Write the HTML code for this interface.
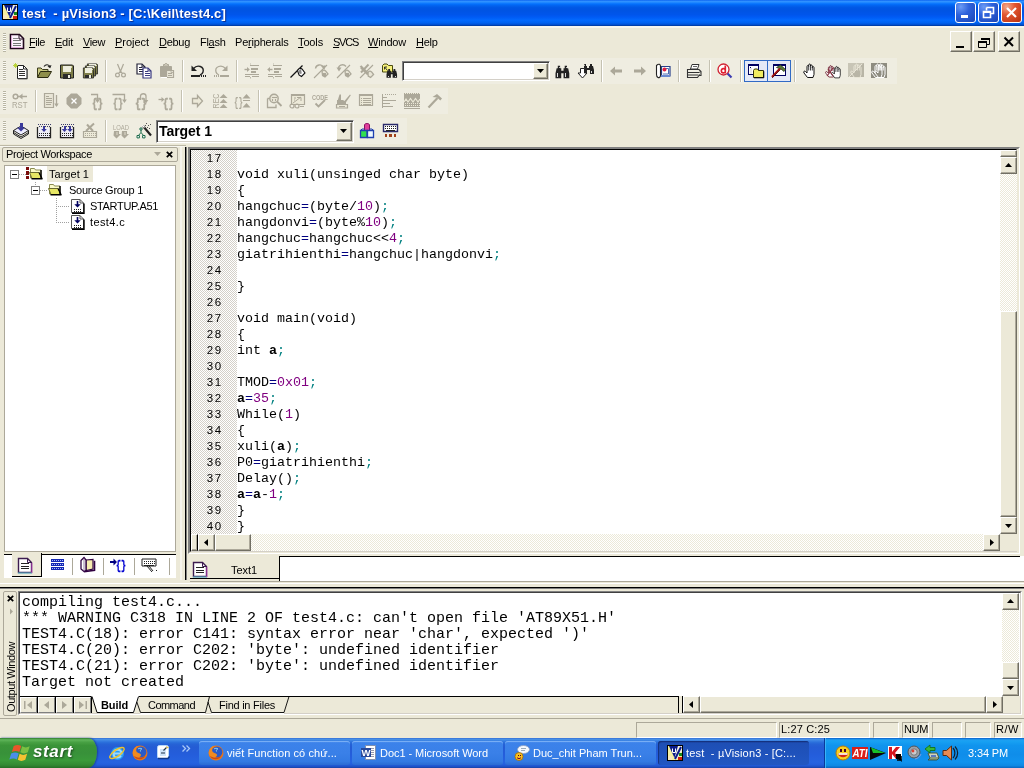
<!DOCTYPE html>
<html><head><meta charset="utf-8"><title>test - µVision3</title>
<style>
*{box-sizing:border-box;margin:0;padding:0}
html,body{width:1024px;height:768px;overflow:hidden;background:#ece9d8;font-family:"Liberation Sans",sans-serif;font-size:11px;color:#000}
.a{position:absolute}
.tx,.code,.out,.ln{will-change:transform}
svg{position:absolute;overflow:visible;will-change:transform}
#title{left:0;top:0;width:1024px;height:26px;background:linear-gradient(to bottom,#0058ee 0%,#3593ff 4%,#288eff 8%,#127dff 12%,#036ffc 16%,#0262ee 22%,#0057e5 30%,#0054e3 40%,#0055eb 56%,#005bf5 66%,#026afe 78%,#0062ef 88%,#0052d6 94%,#0040ab 98%,#003092 100%)}
#title .t{color:#fff;font-weight:bold;font-size:13px;white-space:pre;text-shadow:1px 1px 1px #0a2a8a}
.tb{top:2px;width:21px;height:21px;border:1px solid #fff;border-radius:3px;background:radial-gradient(circle at 25% 20%,#6b9bf5 0%,#2e62dc 40%,#1a45b5 100%)}
.tb.x{background:radial-gradient(circle at 25% 20%,#f3a98c 0%,#e2552f 40%,#b52f0e 100%)}
.mdib{top:31px;width:22px;height:21px;background:#ece9d8;border:1px solid;border-color:#fff #716f64 #716f64 #fff;box-shadow:inset -1px -1px 0 #aca899}
.bar{background:#efede1}
.sep{width:1px;background:#c5c2b2;box-shadow:1px 0 0 #fff}
.grip{width:3px;background:repeating-linear-gradient(to bottom,#b8b5a2 0,#b8b5a2 1px,#fbfaf4 1px,#fbfaf4 2px)}
.sunk{border:1px solid;border-color:#808080 #fff #fff #808080;box-shadow:inset 1px 1px 0 #404040, inset -1px -1px 0 #d4d0c8;background:#fff}
.btn{background:#ece9d8;border:1px solid;border-color:#fff #716f64 #716f64 #fff;box-shadow:inset -1px -1px 0 #aca899}
.dith{background-color:#fff;background-image:linear-gradient(45deg,#d4d0c8 25%,transparent 25%,transparent 75%,#d4d0c8 75%),linear-gradient(45deg,#d4d0c8 25%,transparent 25%,transparent 75%,#d4d0c8 75%);background-size:2px 2px;background-position:0 0,1px 1px}
.dith2{background-color:#fff;background-image:linear-gradient(45deg,#ece9d8 25%,transparent 25%,transparent 75%,#ece9d8 75%),linear-gradient(45deg,#ece9d8 25%,transparent 25%,transparent 75%,#ece9d8 75%);background-size:2px 2px;background-position:0 0,1px 1px}
.code{font-family:"Liberation Mono",monospace;font-size:13.33px;white-space:pre;line-height:16px;color:#000}
.ln{font-family:"Liberation Sans",sans-serif;font-size:11.5px;line-height:16px;color:#000;white-space:pre}
.ln i{display:inline-block;width:8px;text-align:center;font-style:normal}
.n{color:#800080}.s{color:#008080}.o{color:#000080}.k{font-weight:bold}
.out{font-family:"Liberation Mono",monospace;font-size:15px;white-space:pre;line-height:16px;color:#000}
</style></head><body>
<div id="title" class="a"><div class="a tx t" style="left:22px;top:6px;white-space:pre;letter-spacing:0.168px;">test  - µVision3 - [C:\Keil\test4.c]</div><svg style="left:2px;top:4px" width="16" height="16" viewBox="0 0 16 16"><rect x="0" y="0" width="16" height="16" fill="#000" shape-rendering="crispEdges"/><rect x="1" y="1" width="14" height="14" fill="#f4f0a0" shape-rendering="crispEdges"/><path d="M2 1h12l-6 13z" fill="#0a1a8a" /><path d="M11 1h4v5l-5 8h-3z" fill="#f4f0e0" /><path d="M8 14l6-12" fill="none" stroke="#0a1a8a" stroke-width="2" /><rect x="12" y="8" width="3" height="3" fill="#1a8a1a" shape-rendering="crispEdges"/><rect x="11" y="12" width="4" height="3" fill="#d02010" shape-rendering="crispEdges"/><path d="M5.5 3.5v4h3v-4" fill="none" stroke="#ffffff" stroke-width="1" /><rect x="1" y="11" width="4" height="4" fill="#f8e8c0" shape-rendering="crispEdges"/></svg><div class="a tb" style="left:955px"><svg style="left:0px;top:0px" width="19" height="19" viewBox="0 0 19 19"><rect x="5" y="12" width="7" height="3" fill="#ffffff" shape-rendering="crispEdges"/></svg></div><div class="a tb" style="left:978px"><svg style="left:0px;top:0px" width="19" height="19" viewBox="0 0 19 19"><path d="M7.5 4.5h7v6h-3 M7.5 4.5v3" fill="none" stroke="#ffffff" stroke-width="1.6" /><path d="M4.5 8.5h7v6h-7z M4.5 9.2h7" fill="none" stroke="#ffffff" stroke-width="1.6" /></svg></div><div class="a tb x" style="left:1001px"><svg style="left:0px;top:0px" width="19" height="19" viewBox="0 0 19 19"><path d="M5 5l9 9M14 5l-9 9" fill="none" stroke="#ffffff" stroke-width="2.2" /></svg></div></div>
<div class="a" style="left:0;top:26px;width:1024px;height:2px;background:#f7f6ee"></div><div class="a grip" style="left:3px;top:33px;height:19px"></div><svg style="left:10px;top:34px" width="16" height="16" viewBox="0 0 16 16"><path d="M0.5 0.5h9l4 4v10h-13z" fill="#fdf4fd" stroke="#20081c" stroke-width="1.6" /><path d="M9 1v4h4" fill="none" stroke="#20081c" stroke-width="1" /><rect x="3" y="4" width="5" height="1" fill="#888" shape-rendering="crispEdges"/><rect x="3" y="6" width="8" height="1.4" fill="#777" shape-rendering="crispEdges"/><rect x="3" y="8.5" width="8" height="1.4" fill="#777" shape-rendering="crispEdges"/><rect x="3" y="11" width="8" height="1.4" fill="#777" shape-rendering="crispEdges"/><path d="M1.5 1.5v12h11" fill="none" stroke="#e8a8e0" stroke-width="0.8" /></svg><div class="a tx " style="left:28.5px;top:36px;white-space:pre;letter-spacing:-0.438px;font-size:11px"><u>F</u>ile</div><div class="a tx " style="left:54.5px;top:36px;white-space:pre;letter-spacing:-0.242px;font-size:11px"><u>E</u>dit</div><div class="a tx " style="left:82.5px;top:36px;white-space:pre;letter-spacing:-0.414px;font-size:11px"><u>V</u>iew</div><div class="a tx " style="left:114.5px;top:36px;white-space:pre;letter-spacing:-0.036px;font-size:11px"><u>P</u>roject</div><div class="a tx " style="left:158.5px;top:36px;white-space:pre;letter-spacing:-0.287px;font-size:11px"><u>D</u>ebug</div><div class="a tx " style="left:199.5px;top:36px;white-space:pre;letter-spacing:-0.284px;font-size:11px">Fl<u>a</u>sh</div><div class="a tx " style="left:234.5px;top:36px;white-space:pre;letter-spacing:-0.197px;font-size:11px">Pe<u>r</u>ipherals</div><div class="a tx " style="left:297.5px;top:36px;white-space:pre;letter-spacing:-0.138px;font-size:11px"><u>T</u>ools</div><div class="a tx " style="left:332.5px;top:36px;white-space:pre;letter-spacing:-1.242px;font-size:11px"><u>S</u>VCS</div><div class="a tx " style="left:367.5px;top:36px;white-space:pre;letter-spacing:-0.190px;font-size:11px"><u>W</u>indow</div><div class="a tx " style="left:415.5px;top:36px;white-space:pre;letter-spacing:-0.285px;font-size:11px"><u>H</u>elp</div>
<div class="a mdib" style="left:950px"><svg style="left:0px;top:0px" width="20" height="19" viewBox="0 0 20 19"><rect x="5" y="14" width="8" height="2" fill="#000" shape-rendering="crispEdges"/></svg></div><div class="a mdib" style="left:973px"><svg style="left:0px;top:0px" width="20" height="19" viewBox="0 0 20 19"><path d="M7.5 6.5h8v6h-3" fill="none" stroke="#000" stroke-width="1" /><rect x="7" y="6" width="9" height="2" fill="#000" shape-rendering="crispEdges"/><path d="M4.5 10.5h8v5h-8z" fill="none" stroke="#000" stroke-width="1" /><rect x="4" y="9" width="9" height="2" fill="#000" shape-rendering="crispEdges"/></svg></div><div class="a mdib" style="left:998px"><svg style="left:0px;top:0px" width="20" height="19" viewBox="0 0 20 19"><path d="M5.5 5.5l8.5 8.5M14 5.5l-8.5 8.5" fill="none" stroke="#000" stroke-width="2" /></svg></div>
<div class="a bar" style="left:0;top:58px;width:897px;height:26px"></div><div class="a grip" style="left:3px;top:61px;height:19px"></div><svg style="left:13px;top:63px" width="16" height="16" viewBox="0 0 16 16"><path d="M4.5 2.5h6l3.5 3.5v9.5h-9.5z" fill="#fff" stroke="#222" stroke-width="1" /><path d="M10.5 2.5v3.5h3.5" fill="none" stroke="#222" stroke-width="1" /><rect x="6" y="6" width="4" height="1" fill="#333" shape-rendering="crispEdges"/><rect x="6" y="8" width="6" height="1" fill="#333" shape-rendering="crispEdges"/><rect x="6" y="10" width="6" height="1" fill="#333" shape-rendering="crispEdges"/><rect x="6" y="12" width="6" height="1" fill="#333" shape-rendering="crispEdges"/><path d="M14.3 6v10h-9.5" fill="none" stroke="#555" stroke-width="0.8" /><path d="M2.5 0v5M0 2.5h5M0.8 0.8l3.4 3.4M4.2 0.8l-3.4 3.4" fill="none" stroke="#b4d030" stroke-width="0.9" /></svg><svg style="left:36px;top:63px" width="16" height="16" viewBox="0 0 16 16"><path d="M1.5 14v-9h3.5l1.5 1.5h5.5v2" fill="#c8c880" stroke="#3a3a1a" stroke-width="1" /><path d="M1.5 14.5l3-6h11l-3.5 6z" fill="#8e8e4a" stroke="#2a2a10" stroke-width="1" /><path d="M8 3.5c1.5-2.5 5-2.5 6 0.5" fill="none" stroke="#222" stroke-width="1.1" /><path d="M15.5 2l-1.2 3.2l-2.8-1.7z" fill="#222" /></svg><svg style="left:59px;top:63px" width="16" height="16" viewBox="0 0 16 16"><g transform="translate(1,1.5) scale(1)"><path d="M0.5 0.5h12l1 1v12h-13z" fill="#7d7d48" stroke="#222" stroke-width="1" /><rect x="3" y="1" width="8" height="6" fill="#eeeede" shape-rendering="crispEdges"/><rect x="3" y="9" width="8" height="5" fill="#2a2a2a" shape-rendering="crispEdges"/><rect x="8" y="10" width="2" height="3" fill="#eeeede" shape-rendering="crispEdges"/><rect x="11.2" y="1.5" width="1.2" height="1.5" fill="#d8d8b0" shape-rendering="crispEdges"/></g></svg><svg style="left:82px;top:63px" width="16" height="16" viewBox="0 0 16 16"><g transform="translate(5,0.5) scale(0.78)"><path d="M0.5 0.5h12l1 1v12h-13z" fill="#7d7d48" stroke="#222" stroke-width="1" /><rect x="3" y="1" width="8" height="6" fill="#eeeede" shape-rendering="crispEdges"/><rect x="3" y="9" width="8" height="5" fill="#2a2a2a" shape-rendering="crispEdges"/><rect x="8" y="10" width="2" height="3" fill="#eeeede" shape-rendering="crispEdges"/><rect x="11.2" y="1.5" width="1.2" height="1.5" fill="#d8d8b0" shape-rendering="crispEdges"/></g><g transform="translate(3,2.5) scale(0.78)"><path d="M0.5 0.5h12l1 1v12h-13z" fill="#7d7d48" stroke="#222" stroke-width="1" /><rect x="3" y="1" width="8" height="6" fill="#eeeede" shape-rendering="crispEdges"/><rect x="3" y="9" width="8" height="5" fill="#2a2a2a" shape-rendering="crispEdges"/><rect x="8" y="10" width="2" height="3" fill="#eeeede" shape-rendering="crispEdges"/><rect x="11.2" y="1.5" width="1.2" height="1.5" fill="#d8d8b0" shape-rendering="crispEdges"/></g><g transform="translate(1,4.5) scale(0.78)"><path d="M0.5 0.5h12l1 1v12h-13z" fill="#7d7d48" stroke="#222" stroke-width="1" /><rect x="3" y="1" width="8" height="6" fill="#eeeede" shape-rendering="crispEdges"/><rect x="3" y="9" width="8" height="5" fill="#2a2a2a" shape-rendering="crispEdges"/><rect x="8" y="10" width="2" height="3" fill="#eeeede" shape-rendering="crispEdges"/><rect x="11.2" y="1.5" width="1.2" height="1.5" fill="#d8d8b0" shape-rendering="crispEdges"/></g></svg><div class="a sep" style="left:105px;top:60px;height:22px"></div><svg style="left:113px;top:63px" width="16" height="16" viewBox="0 0 16 16"><path d="M4.5 1l3.5 8.5M10.5 1l-3.5 8.5" fill="none" stroke="#aca899" stroke-width="1.2" /><circle cx="4.5" cy="12" r="1.9" fill="none" stroke="#aca899" stroke-width="1.2"/><circle cx="10.5" cy="12" r="1.9" fill="none" stroke="#aca899" stroke-width="1.2"/><path d="M5.5 10.3l2-2l2 2" fill="none" stroke="#aca899" stroke-width="1.1" /></svg><svg style="left:136px;top:63px" width="16" height="16" viewBox="0 0 16 16"><g transform="translate(0.5,0.5)"><path d="M0.5 0.5h5l3 3v7h-8z" fill="#fff" stroke="#26263a" stroke-width="1.2" /><path d="M5.5 0.5v3h3" fill="none" stroke="#26263a" stroke-width="1" /><rect x="2" y="3" width="3" height="1" fill="#26263a" shape-rendering="crispEdges"/><rect x="2" y="5" width="5" height="1" fill="#26263a" shape-rendering="crispEdges"/><rect x="2" y="7" width="5" height="1" fill="#26263a" shape-rendering="crispEdges"/></g><g transform="translate(6.5,4.5)"><path d="M0.5 0.5h5l3 3v7h-8z" fill="#fff" stroke="#3a3a80" stroke-width="1.2" /><path d="M5.5 0.5v3h3" fill="none" stroke="#3a3a80" stroke-width="1" /><rect x="2" y="3" width="3" height="1" fill="#3a3a80" shape-rendering="crispEdges"/><rect x="2" y="5" width="5" height="1" fill="#3a3a80" shape-rendering="crispEdges"/><rect x="2" y="7" width="5" height="1" fill="#3a3a80" shape-rendering="crispEdges"/></g></svg><svg style="left:159px;top:63px" width="16" height="16" viewBox="0 0 16 16"><path d="M1.5 3.5h11v10h-11z" fill="#aca899" stroke="#aca899" stroke-width="1" /><path d="M4.5 3v-1.5h1.5c0-1.6 2-1.6 2 0h1.5v1.5z" fill="#d8d4c4" stroke="#aca899" stroke-width="1" /><path d="M7.5 7.5h7v7h-7z" fill="#e8e5d6" stroke="#aca899" stroke-width="1.2" /><rect x="9" y="10" width="4" height="1" fill="#aca899" shape-rendering="crispEdges"/><rect x="9" y="12" width="4" height="1" fill="#aca899" shape-rendering="crispEdges"/><path d="M12 7.5v2h2.5" fill="none" stroke="#aca899" stroke-width="0.8" /><path d="M2 14.5h6" fill="none" stroke="#ffffff" stroke-width="1" /></svg><div class="a sep" style="left:182px;top:60px;height:22px"></div><svg style="left:190px;top:63px" width="16" height="16" viewBox="0 0 16 16"><path d="M3.5 5.5c4-4.5 11-2 9.5 3.5c-0.4 1.5-1.5 2.5-3 3" fill="none" stroke="#222" stroke-width="1.4" /><path d="M1.5 2.5v5.5h5.5z" fill="#222" /><rect x="0.5" y="12" width="9" height="2" fill="#222" shape-rendering="crispEdges"/><rect x="10.5" y="12" width="1" height="2" fill="#222" shape-rendering="crispEdges"/><rect x="12.5" y="12" width="1" height="2" fill="#222" shape-rendering="crispEdges"/><rect x="14.5" y="12" width="1" height="2" fill="#222" shape-rendering="crispEdges"/></svg><svg style="left:213px;top:63px" width="16" height="16" viewBox="0 0 16 16"><path d="M12.5 5.5c-4-4.5-11-2-9.5 3.5c0.4 1.5 1.5 2.5 3 3" fill="none" stroke="#aca899" stroke-width="1.3" /><path d="M14.5 2.5v5.5h-5.5z" fill="#aca899" /><rect x="6.5" y="12" width="9" height="1.6" fill="#aca899" shape-rendering="crispEdges"/><rect x="4.5" y="12" width="1" height="1.6" fill="#aca899" shape-rendering="crispEdges"/><rect x="2.5" y="12" width="1" height="1.6" fill="#aca899" shape-rendering="crispEdges"/><rect x="0.5" y="12" width="1" height="1.6" fill="#aca899" shape-rendering="crispEdges"/></svg><div class="a sep" style="left:236px;top:60px;height:22px"></div><svg style="left:244px;top:63px" width="16" height="16" viewBox="0 0 16 16"><rect x="6" y="2" width="9" height="1" fill="#aca899" shape-rendering="crispEdges"/><rect x="7" y="5" width="7" height="1.6" fill="#aca899" shape-rendering="crispEdges"/><rect x="7" y="8" width="5" height="1.6" fill="#aca899" shape-rendering="crispEdges"/><rect x="1" y="11" width="14" height="1" fill="#aca899" shape-rendering="crispEdges"/><rect x="1" y="13" width="5" height="1" fill="#aca899" shape-rendering="crispEdges"/><rect x="8" y="13" width="7" height="1" fill="#aca899" shape-rendering="crispEdges"/><path d="M6.5 0.5v1M6.5 14v1.5" fill="none" stroke="#aca899" stroke-width="0.8" /><path d="M0.5 6.5h3.5" fill="none" stroke="#aca899" stroke-width="1.4" /><path d="M3 4l2.8 2.5l-2.8 2.5z" fill="#aca899" /></svg><svg style="left:267px;top:63px" width="16" height="16" viewBox="0 0 16 16"><rect x="6" y="2" width="9" height="1" fill="#aca899" shape-rendering="crispEdges"/><rect x="7" y="5" width="7" height="1.6" fill="#aca899" shape-rendering="crispEdges"/><rect x="7" y="8" width="5" height="1.6" fill="#aca899" shape-rendering="crispEdges"/><rect x="1" y="11" width="14" height="1" fill="#aca899" shape-rendering="crispEdges"/><rect x="1" y="13" width="5" height="1" fill="#aca899" shape-rendering="crispEdges"/><rect x="8" y="13" width="7" height="1" fill="#aca899" shape-rendering="crispEdges"/><path d="M6.5 0.5v1M6.5 14v1.5" fill="none" stroke="#aca899" stroke-width="0.8" /><path d="M2 6.5h3.5" fill="none" stroke="#aca899" stroke-width="1.4" /><path d="M3 4l-2.8 2.5l2.8 2.5z" fill="#aca899" /></svg><svg style="left:290px;top:63px" width="16" height="16" viewBox="0 0 16 16"><path d="M0.5 14.5l12-12" fill="none" stroke="#111" stroke-width="1.2" /><path d="M7.5 7.5c1.5-2.5 3-2.5 4.5-1.5l3 4l-3.5 3.5l-2.5-1.5z" fill="#fff" stroke="#111" stroke-width="1.1" /><path d="M8 8l3-2l0.8 4.5l-2 0.5z" fill="#888" /></svg><svg style="left:313px;top:63px" width="16" height="16" viewBox="0 0 16 16"><path d="M1 15l13-13" fill="none" stroke="#aca899" stroke-width="1.1" /><path d="M9 8.5c1.2-1.6 2.4-1.6 3.6-0.6l2.4 3l-3 3l-2.4-1.4z" fill="#e8e5d6" stroke="#aca899" stroke-width="1.3" /><rect x="10" y="10" width="3" height="3" fill="#aca899" shape-rendering="crispEdges"/><path d="M2.5 5.5c0.5-4 6-5 8-1.5" fill="none" stroke="#aca899" stroke-width="1.4" /><path d="M8 3.2l4.5-1l-1 4.5z" fill="#aca899" /></svg><svg style="left:336px;top:63px" width="16" height="16" viewBox="0 0 16 16"><path d="M1 15l13-13" fill="none" stroke="#aca899" stroke-width="1.1" /><path d="M9 8.5c1.2-1.6 2.4-1.6 3.6-0.6l2.4 3l-3 3l-2.4-1.4z" fill="#e8e5d6" stroke="#aca899" stroke-width="1.3" /><rect x="10" y="10" width="3" height="3" fill="#aca899" shape-rendering="crispEdges"/><path d="M3 6.5c-1.5-4 4-6.5 7-3" fill="none" stroke="#aca899" stroke-width="1.4" /><path d="M0.5 4.5h5l-2.5 4z" fill="#aca899" /></svg><svg style="left:359px;top:63px" width="16" height="16" viewBox="0 0 16 16"><path d="M1 15l13-13" fill="none" stroke="#aca899" stroke-width="1.1" /><path d="M1.5 3l8 8M2 4.5l7 7" fill="none" stroke="#aca899" stroke-width="2.2" /><path d="M9.5 1.5l-7.5 8" fill="none" stroke="#aca899" stroke-width="2" /><path d="M9 9.5c1.2-1.6 2.4-1.6 3.6-0.6l2 2.6l-3 3l-2.4-1.4z" fill="#e8e5d6" stroke="#aca899" stroke-width="1.3" /></svg><svg style="left:382px;top:63px" width="16" height="16" viewBox="0 0 16 16"><path d="M0.5 2.5l1.5-1.5h3l1.5 1.5h4v6.5h-10z" fill="#f5f07a" stroke="#4a4a10" stroke-width="1" /><path d="M2.5 4l3 3.5M2.5 4v2.5M2.5 4h2.5" fill="none" stroke="#222" stroke-width="0.9" /><g transform="translate(4.5,5) scale(0.88)"><path d="M2 1h2v2h1v2h2v-2h1v-2h2v2h1l1 4v4h-5v-4h-2v4h-5v-4l1-4h1z" fill="#222" /><rect x="1.5" y="9" width="1.5" height="1.5" fill="#ddd" shape-rendering="crispEdges"/><rect x="9.5" y="9" width="1.5" height="1.5" fill="#ddd" shape-rendering="crispEdges"/></g></svg><svg style="left:555px;top:63px" width="16" height="16" viewBox="0 0 16 16"><g transform="translate(0.5,1.5) scale(1.15,1.25)"><g transform="translate(0,0)"><path d="M2 1h2v2h1v2h2v-2h1v-2h2v2h1l1 4v4h-5v-4h-2v4h-5v-4l1-4h1z" fill="#222" /><rect x="1" y="7" width="1" height="3" fill="#ddd" shape-rendering="crispEdges"/><rect x="8" y="7" width="1" height="3" fill="#ddd" shape-rendering="crispEdges"/><rect x="3" y="1.6" width="0.8" height="1" fill="#bbb" shape-rendering="crispEdges"/><rect x="9" y="1.6" width="0.8" height="1" fill="#bbb" shape-rendering="crispEdges"/></g></g></svg><svg style="left:578px;top:63px" width="16" height="16" viewBox="0 0 16 16"><g transform="translate(4,0)"><path d="M2 1h2v2h1v2h2v-2h1v-2h2v2h1l1 4v4h-4v-4h-3v4h-3v-8h1z" fill="#222" /><rect x="9" y="8" width="1.2" height="2" fill="#ddd" shape-rendering="crispEdges"/></g><path d="M2.5 5.5h4v4.5h2.5l-4.5 5l-4.5-5h2.5z" fill="#fff" stroke="#222" stroke-width="1" /></svg><div class="a sep" style="left:601px;top:60px;height:22px"></div><svg style="left:609px;top:63px" width="16" height="16" viewBox="0 0 16 16"><path d="M1 8l5-4.5v3h7v3h-7v3z" fill="#aca899" /></svg><svg style="left:632px;top:63px" width="16" height="16" viewBox="0 0 16 16"><path d="M14 8l-5-4.5v3h-7v3h7v3z" fill="#aca899" /></svg><svg style="left:655px;top:63px" width="16" height="16" viewBox="0 0 16 16"><path d="M6.5 3.5h8.5v9.5h-8.5z" fill="#fff" stroke="#28408a" stroke-width="1.2" /><path d="M8 5.5h5.5v5.5h-5.5" fill="none" stroke="#4a6ab0" stroke-width="1" /><rect x="6" y="12" width="9" height="1.5" fill="#6a8ad0" shape-rendering="crispEdges"/><circle cx="9.5" cy="6.5" r="2" fill="#e02040"/><path d="M1.5 2.5c2.5-2.5 4-1 4 1v9c0 1.5-1.5 2.5-2.5 2c-1-0.5-1.5-1.5-1.5-3z" fill="#fff" stroke="#222" stroke-width="1.1" /></svg><div class="a sep" style="left:678px;top:60px;height:22px"></div><svg style="left:686px;top:63px" width="16" height="16" viewBox="0 0 16 16"><path d="M4.5 6l1.5-4.5h7l-1.5 4.5z" fill="#fff" stroke="#333" stroke-width="1" /><rect x="7" y="3" width="4" height="0.8" fill="#666" shape-rendering="crispEdges"/><rect x="6.5" y="4.6" width="4" height="0.8" fill="#666" shape-rendering="crispEdges"/><path d="M1.5 6.5h11.5l2 2v4h-2l-1.5 2h-10z" fill="#f0efe4" stroke="#333" stroke-width="1.1" /><path d="M1.5 9.5h11.5M1.5 12h11" fill="none" stroke="#333" stroke-width="1" /><path d="M13 9.5l2-1" fill="none" stroke="#333" stroke-width="0.8" /><rect x="12.5" y="10.5" width="1.5" height="1" fill="#777" shape-rendering="crispEdges"/></svg><div class="a sep" style="left:709px;top:60px;height:22px"></div><svg style="left:717px;top:63px" width="16" height="16" viewBox="0 0 16 16"><circle cx="6.5" cy="6.5" r="5.5" fill="#fff" stroke="#d02030" stroke-width="1.3"/><path d="M10.5 10.5l4 4" fill="none" stroke="#3a3ab0" stroke-width="2.2" /><path d="M8.3 2.5v8M8.3 6.5c-1-1.5-4-1.2-4 1.2c0 2.6 3 2.8 4 1.3" fill="none" stroke="#e02030" stroke-width="1.7" /></svg><div class="a sep" style="left:740px;top:60px;height:22px"></div><div class="a" style="left:744px;top:60px;width:24px;height:22px;border:1px solid #316ac5;background:#e4e9f7"></div><div class="a" style="left:767px;top:60px;width:24px;height:22px;border:1px solid #316ac5;background:#e4e9f7"></div><svg style="left:748px;top:63px" width="16" height="16" viewBox="0 0 16 16"><rect x="0" y="1" width="11" height="11" fill="#000060" shape-rendering="crispEdges"/><rect x="1" y="3" width="9" height="8" fill="#fff" shape-rendering="crispEdges"/><rect x="1.5" y="3.5" width="1" height="1" fill="#000060" shape-rendering="crispEdges"/><rect x="2" y="5" width="2" height="6" fill="#e8e8e8" shape-rendering="crispEdges"/><path d="M5.5 7.5l1-1.5h3l1 1.5h5v7h-10z" fill="#f0ec60" stroke="#33330a" stroke-width="1" /><path d="M6 14.8h9.8v-6.5" fill="none" stroke="#000" stroke-width="0.9" /></svg><svg style="left:771px;top:63px" width="16" height="16" viewBox="0 0 16 16"><rect x="2" y="1" width="13" height="12" fill="#000060" shape-rendering="crispEdges"/><rect x="3" y="3" width="11" height="9" fill="#fff" shape-rendering="crispEdges"/><path d="M5.5 4.5l4-2.5l5 4.5l-1.5 2l-3-2.5z" fill="#5a7a3a" stroke="#2a3a1a" stroke-width="0.8" /><path d="M1 14l8-8.5" fill="none" stroke="#a01010" stroke-width="2" /><path d="M1 15l8.5-8.5" fill="none" stroke="#400" stroke-width="0.7" /></svg><div class="a sep" style="left:794px;top:60px;height:22px"></div><svg style="left:802px;top:63px" width="16" height="16" viewBox="0 0 16 16"><g transform="translate(0,0)"><path d="M5.5 14.5l-3.5-4.5c-1-1.5 0.5-2.5 1.5-1.5l1.5 1.5v-6.5c0-1.3 1.7-1.3 1.7 0v-1.5c0-1.3 1.8-1.3 1.8 0v1c0-1.3 1.8-1.3 1.8 0v1.5c0-1.2 1.7-1.2 1.7 0v7l-1 3z" fill="#fff" stroke="#111" stroke-width="1" /><path d="M6.7 3.5v4M8.5 3v4.5M10.3 4v3.5" fill="none" stroke="#111" stroke-width="0.8" /></g></svg><svg style="left:825px;top:63px" width="16" height="16" viewBox="0 0 16 16"><g transform="scale(0.85) translate(-1,2)"><g transform="translate(0,0)"><path d="M5.5 14.5l-3.5-4.5c-1-1.5 0.5-2.5 1.5-1.5l1.5 1.5v-6.5c0-1.3 1.7-1.3 1.7 0v-1.5c0-1.3 1.8-1.3 1.8 0v1c0-1.3 1.8-1.3 1.8 0v1.5c0-1.2 1.7-1.2 1.7 0v7l-1 3z" fill="#fff" stroke="#6a1a2a" stroke-width="1" /><path d="M6.7 3.5v4M8.5 3v4.5M10.3 4v3.5" fill="none" stroke="#6a1a2a" stroke-width="0.8" /></g></g><g transform="scale(0.85) translate(6,3)"><g transform="translate(0,0)"><path d="M5.5 14.5l-3.5-4.5c-1-1.5 0.5-2.5 1.5-1.5l1.5 1.5v-6.5c0-1.3 1.7-1.3 1.7 0v-1.5c0-1.3 1.8-1.3 1.8 0v1c0-1.3 1.8-1.3 1.8 0v1.5c0-1.2 1.7-1.2 1.7 0v7l-1 3z" fill="#fff" stroke="#222" stroke-width="1" /><path d="M6.7 3.5v4M8.5 3v4.5M10.3 4v3.5" fill="none" stroke="#222" stroke-width="0.8" /></g></g><path d="M2 13l6-8M3 6l5 7" fill="none" stroke="#8a3040" stroke-width="1.2" /></svg><svg style="left:848px;top:63px" width="16" height="16" viewBox="0 0 16 16"><rect x="0" y="0" width="16" height="14" fill="#b8b5a6" shape-rendering="crispEdges"/><path d="M0 14l16-14h-16z" fill="#c8c5b6" /><g transform="translate(1,0)"><path d="M5.5 14.5l-3.5-4.5c-1-1.5 0.5-2.5 1.5-1.5l1.5 1.5v-6.5c0-1.3 1.7-1.3 1.7 0v-1.5c0-1.3 1.8-1.3 1.8 0v1c0-1.3 1.8-1.3 1.8 0v1.5c0-1.2 1.7-1.2 1.7 0v7l-1 3z" fill="none" stroke="#e8e5d6" stroke-width="1" /><path d="M6.7 3.5v4M8.5 3v4.5M10.3 4v3.5" fill="none" stroke="#e8e5d6" stroke-width="0.8" /></g><path d="M1 14l13-13" fill="none" stroke="#e8e5d6" stroke-width="1" /></svg><svg style="left:871px;top:63px" width="16" height="16" viewBox="0 0 16 16"><rect x="0" y="0" width="16" height="15" fill="#8e8c80" shape-rendering="crispEdges"/><g transform="translate(-1,0)"><path d="M5.5 14.5l-3.5-4.5c-1-1.5 0.5-2.5 1.5-1.5l1.5 1.5v-6.5c0-1.3 1.7-1.3 1.7 0v-1.5c0-1.3 1.8-1.3 1.8 0v1c0-1.3 1.8-1.3 1.8 0v1.5c0-1.2 1.7-1.2 1.7 0v7l-1 3z" fill="none" stroke="#fff" stroke-width="1" /><path d="M6.7 3.5v4M8.5 3v4.5M10.3 4v3.5" fill="none" stroke="#fff" stroke-width="0.8" /></g><g transform="translate(2,0)"><path d="M5.5 14.5l-3.5-4.5c-1-1.5 0.5-2.5 1.5-1.5l1.5 1.5v-6.5c0-1.3 1.7-1.3 1.7 0v-1.5c0-1.3 1.8-1.3 1.8 0v1c0-1.3 1.8-1.3 1.8 0v1.5c0-1.2 1.7-1.2 1.7 0v7l-1 3z" fill="none" stroke="#fff" stroke-width="1" /><path d="M6.7 3.5v4M8.5 3v4.5M10.3 4v3.5" fill="none" stroke="#fff" stroke-width="0.8" /></g></svg>
<div class="a sunk" style="left:402px;top:61px;width:148px;height:20px"></div><div class="a btn" style="left:533px;top:63px;width:15px;height:16px"></div><svg style="left:537px;top:69px" width="7" height="4" viewBox="0 0 7 4"><path d="M0 0h7l-3.5 4z" fill="#000" /></svg><div class="a bar" style="left:0;top:88px;width:448px;height:26px"></div><div class="a grip" style="left:3px;top:91px;height:19px"></div><svg style="left:12px;top:93px" width="16" height="16" viewBox="0 0 16 16"><circle cx="3.5" cy="3.5" r="2.3" fill="none" stroke="#aca899" stroke-width="1.5"/><path d="M6 3.5h9" fill="none" stroke="#aca899" stroke-width="1.5" /><path d="M7 3.5l3.5-3v6z" fill="#aca899" /><text x="0" y="15" font-family="Liberation Sans" font-size="9" fill="#aca899" textLength="15.5" lengthAdjust="spacingAndGlyphs">RST</text></svg><div class="a sep" style="left:35px;top:90px;height:22px"></div><svg style="left:43px;top:93px" width="16" height="16" viewBox="0 0 16 16"><path d="M1.5 0.5h9v14h-9z" fill="#e8e5d6" stroke="#aca899" stroke-width="1.2" /><rect x="3" y="3" width="3" height="1" fill="#aca899" shape-rendering="crispEdges"/><rect x="3" y="5" width="6" height="1" fill="#aca899" shape-rendering="crispEdges"/><rect x="3" y="7" width="6" height="1" fill="#aca899" shape-rendering="crispEdges"/><rect x="3" y="9" width="6" height="1" fill="#aca899" shape-rendering="crispEdges"/><rect x="3" y="11" width="5" height="1" fill="#aca899" shape-rendering="crispEdges"/><path d="M13.5 2v11" fill="none" stroke="#aca899" stroke-width="1.3" /><path d="M11.3 10.5h4.4l-2.2 3.5z" fill="#aca899" /></svg><svg style="left:66px;top:93px" width="16" height="16" viewBox="0 0 16 16"><path d="M5 0.5h6l4.5 4.5v6l-4.5 4.5h-6l-4.5-4.5v-6z" fill="#aca899" /><path d="M5.5 5.5l5 5M10.5 5.5l-5 5" fill="none" stroke="#fff" stroke-width="1.3" /></svg><svg style="left:89px;top:93px" width="16" height="16" viewBox="0 0 16 16"><text stroke="#aca899" stroke-width="0.5" x="3" y="14" font-family="Liberation Mono" font-size="13" fill="#aca899" font-weight="bold" textLength="11" lengthAdjust="spacingAndGlyphs">{}</text><path d="M2 1.5h6.5v7" fill="none" stroke="#aca899" stroke-width="1.3" /><path d="M6.2 6.5h4.6l-2.3 3.5z" fill="#aca899" /></svg><svg style="left:112px;top:93px" width="16" height="16" viewBox="0 0 16 16"><text stroke="#aca899" stroke-width="0.5" x="1" y="14" font-family="Liberation Mono" font-size="13" fill="#aca899" font-weight="bold" textLength="10" lengthAdjust="spacingAndGlyphs">{}</text><path d="M0.5 1.5h12v6" fill="none" stroke="#aca899" stroke-width="1.3" /><path d="M10.2 6.5h4.6l-2.3 3.5z" fill="#aca899" /></svg><svg style="left:135px;top:93px" width="16" height="16" viewBox="0 0 16 16"><text stroke="#aca899" stroke-width="0.5" x="0" y="14" font-family="Liberation Mono" font-size="13" fill="#aca899" font-weight="bold" textLength="12" lengthAdjust="spacingAndGlyphs">{}</text><path d="M5.5 7v-4c0-3 5.5-3 5.5 0v5" fill="none" stroke="#aca899" stroke-width="1.3" /><path d="M8.7 7h4.6l-2.3 3.5z" fill="#aca899" /></svg><svg style="left:158px;top:93px" width="16" height="16" viewBox="0 0 16 16"><text stroke="#aca899" stroke-width="0.5" x="5" y="14" font-family="Liberation Mono" font-size="13" fill="#aca899" font-weight="bold" textLength="11" lengthAdjust="spacingAndGlyphs">{}</text><path d="M0.5 6.5h4" fill="none" stroke="#aca899" stroke-width="1.3" /><path d="M3.5 4l3 2.5l-3 2.5z" fill="#aca899" /></svg><div class="a sep" style="left:181px;top:90px;height:22px"></div><svg style="left:189px;top:93px" width="16" height="16" viewBox="0 0 16 16"><path d="M3.5 5.5h5v-3l5 5.5l-5 5.5v-3h-5z" fill="#ece9d8" stroke="#aca899" stroke-width="1.3" /></svg><svg style="left:212px;top:93px" width="16" height="16" viewBox="0 0 16 16"><g transform="rotate(-90 7 15.5)"><text x="7" y="15.5" font-family="Liberation Sans" font-size="9" fill="#aca899" textLength="15" lengthAdjust="spacingAndGlyphs">REC</text></g><path d="M11.5 1l4 4h-8zM11.5 6l4 4h-8zM11.5 11l4 4h-8z" fill="#aca899" /></svg><svg style="left:235px;top:93px" width="16" height="16" viewBox="0 0 16 16"><text x="-1" y="13" font-family="Liberation Mono" font-size="12" fill="#aca899" font-weight="bold" textLength="9" lengthAdjust="spacingAndGlyphs">{}</text><path d="M11.5 1l4 4.5h-8z M11.5 10l4 4.5h-8z" fill="#aca899" /><rect x="8" y="6.8" width="7" height="1.6" fill="#aca899" shape-rendering="crispEdges"/></svg><div class="a sep" style="left:258px;top:90px;height:22px"></div><svg style="left:266px;top:93px" width="16" height="16" viewBox="0 0 16 16"><path d="M1.5 5.5h3M1.5 5.5v9h8.5v-3" fill="none" stroke="#aca899" stroke-width="1.3" /><circle cx="8" cy="5.5" r="4.2" fill="#e8e5d6" stroke="#aca899" stroke-width="1.4"/><rect x="5.5" y="4" width="5" height="1" fill="#aca899" shape-rendering="crispEdges"/><rect x="6" y="6" width="1.4" height="1.6" fill="#aca899" shape-rendering="crispEdges"/><rect x="8.5" y="6" width="1.4" height="1.6" fill="#aca899" shape-rendering="crispEdges"/><path d="M11 8.5l4.5 4.5" fill="none" stroke="#aca899" stroke-width="1.8" /></svg><svg style="left:289px;top:93px" width="16" height="16" viewBox="0 0 16 16"><path d="M2.5 1.5h13v10h-13z" fill="#ece9d8" stroke="#aca899" stroke-width="1.2" /><rect x="2" y="1" width="14" height="2" fill="#aca899" shape-rendering="crispEdges"/><path d="M4 10l8-6M8 4.5h4v3.5M5 5h2M5 7h1" fill="none" stroke="#aca899" stroke-width="1" /><circle cx="3" cy="13" r="2" fill="none" stroke="#aca899" stroke-width="1.2"/><circle cx="8" cy="13" r="2" fill="none" stroke="#aca899" stroke-width="1.2"/><rect x="11" y="12.5" width="4" height="1" fill="#aca899" shape-rendering="crispEdges"/></svg><svg style="left:312px;top:93px" width="16" height="16" viewBox="0 0 16 16"><text x="0" y="6.5" font-family="Liberation Sans" font-size="6.5" fill="#aca899" font-weight="bold" textLength="16" lengthAdjust="spacingAndGlyphs">CODE</text><path d="M3.5 10.5l3 3l6.5-6.5" fill="none" stroke="#aca899" stroke-width="1.8" /></svg><svg style="left:335px;top:93px" width="16" height="16" viewBox="0 0 16 16"><path d="M2 9.5l2.5-8h1.5v7z" fill="#aca899" /><path d="M3.5 9l3.5-2l2 1.5l6-7l0.8 0.8l-5.5 8z" fill="#aca899" /><path d="M2 7h6l3 2v2h-9z" fill="#aca899" /><path d="M1.5 11.5h11v3.5h-11z" fill="#ece9d8" stroke="#aca899" stroke-width="1.2" /><rect x="4" y="12.7" width="6" height="1" fill="#aca899" shape-rendering="crispEdges"/></svg><svg style="left:358px;top:93px" width="16" height="16" viewBox="0 0 16 16"><path d="M1.5 1.5h13v11h-13z" fill="#ece9d8" stroke="#aca899" stroke-width="1.2" /><rect x="1" y="1" width="14" height="2.4" fill="#aca899" shape-rendering="crispEdges"/><rect x="3" y="5" width="1" height="1" fill="#aca899" shape-rendering="crispEdges"/><rect x="5" y="5" width="8" height="1" fill="#aca899" shape-rendering="crispEdges"/><rect x="3" y="7" width="1" height="1" fill="#aca899" shape-rendering="crispEdges"/><rect x="5" y="7" width="8" height="1" fill="#aca899" shape-rendering="crispEdges"/><rect x="3" y="9" width="1" height="1" fill="#aca899" shape-rendering="crispEdges"/><rect x="5" y="9" width="8" height="1" fill="#aca899" shape-rendering="crispEdges"/><rect x="3" y="11" width="1" height="1" fill="#aca899" shape-rendering="crispEdges"/><rect x="5" y="11" width="8" height="1" fill="#aca899" shape-rendering="crispEdges"/></svg><svg style="left:381px;top:93px" width="16" height="16" viewBox="0 0 16 16"><rect x="4" y="1" width="1" height="1" fill="#aca899" shape-rendering="crispEdges"/><rect x="6" y="1" width="1" height="1" fill="#aca899" shape-rendering="crispEdges"/><rect x="8" y="1" width="1" height="1" fill="#aca899" shape-rendering="crispEdges"/><rect x="10" y="1" width="1" height="1" fill="#aca899" shape-rendering="crispEdges"/><rect x="12" y="1" width="1" height="1" fill="#aca899" shape-rendering="crispEdges"/><rect x="14" y="1" width="1" height="1" fill="#aca899" shape-rendering="crispEdges"/><rect x="1" y="1" width="1.4" height="14" fill="#aca899" shape-rendering="crispEdges"/><rect x="2" y="3.5" width="4" height="1.6" fill="#aca899" shape-rendering="crispEdges"/><rect x="2" y="6.5" width="13" height="1.8" fill="#aca899" shape-rendering="crispEdges"/><rect x="2" y="9.5" width="7" height="1.8" fill="#aca899" shape-rendering="crispEdges"/><rect x="2" y="12.5" width="10" height="1.8" fill="#aca899" shape-rendering="crispEdges"/></svg><svg style="left:404px;top:93px" width="16" height="16" viewBox="0 0 16 16"><rect x="0" y="0" width="16" height="14" fill="#aca899" shape-rendering="crispEdges"/><path d="M0 9l2-3l2 3l2.5-3.5l2.5 3.5l2.5-3.5l2.5 3.5l2-3" fill="none" stroke="#ece9d8" stroke-width="1.2" /><rect x="1" y="10" width="1" height="1" fill="#ece9d8" shape-rendering="crispEdges"/><rect x="3" y="10" width="1" height="1" fill="#ece9d8" shape-rendering="crispEdges"/><rect x="5" y="10" width="1" height="1" fill="#ece9d8" shape-rendering="crispEdges"/><rect x="7" y="10" width="1" height="1" fill="#ece9d8" shape-rendering="crispEdges"/><rect x="9" y="10" width="1" height="1" fill="#ece9d8" shape-rendering="crispEdges"/><rect x="11" y="10" width="1" height="1" fill="#ece9d8" shape-rendering="crispEdges"/><rect x="13" y="10" width="1" height="1" fill="#ece9d8" shape-rendering="crispEdges"/><rect x="15" y="10" width="1" height="1" fill="#ece9d8" shape-rendering="crispEdges"/><rect x="1" y="12" width="1" height="1" fill="#ece9d8" shape-rendering="crispEdges"/><rect x="3" y="12" width="1" height="1" fill="#ece9d8" shape-rendering="crispEdges"/><rect x="5" y="12" width="1" height="1" fill="#ece9d8" shape-rendering="crispEdges"/><rect x="7" y="12" width="1" height="1" fill="#ece9d8" shape-rendering="crispEdges"/><rect x="9" y="12" width="1" height="1" fill="#ece9d8" shape-rendering="crispEdges"/><rect x="11" y="12" width="1" height="1" fill="#ece9d8" shape-rendering="crispEdges"/><rect x="13" y="12" width="1" height="1" fill="#ece9d8" shape-rendering="crispEdges"/><rect x="15" y="12" width="1" height="1" fill="#ece9d8" shape-rendering="crispEdges"/><rect x="0" y="14.5" width="16" height="1" fill="#aca899" shape-rendering="crispEdges"/><rect x="1" y="0" width="1" height="1" fill="#ece9d8" shape-rendering="crispEdges"/><rect x="3" y="0" width="1" height="1" fill="#ece9d8" shape-rendering="crispEdges"/><rect x="5" y="0" width="1" height="1" fill="#ece9d8" shape-rendering="crispEdges"/><rect x="7" y="0" width="1" height="1" fill="#ece9d8" shape-rendering="crispEdges"/><rect x="9" y="0" width="1" height="1" fill="#ece9d8" shape-rendering="crispEdges"/><rect x="11" y="0" width="1" height="1" fill="#ece9d8" shape-rendering="crispEdges"/><rect x="13" y="0" width="1" height="1" fill="#ece9d8" shape-rendering="crispEdges"/><rect x="15" y="0" width="1" height="1" fill="#ece9d8" shape-rendering="crispEdges"/></svg><svg style="left:427px;top:93px" width="16" height="16" viewBox="0 0 16 16"><path d="M1.5 14.5l9-9.5" fill="none" stroke="#aca899" stroke-width="2.2" /><path d="M5.5 4l4.5-3l5 4.5l-1.7 2l-3.3-3z" fill="#aca899" /></svg>
<div class="a bar" style="left:0;top:118px;width:407px;height:26px"></div><div class="a grip" style="left:3px;top:121px;height:19px"></div><svg style="left:13px;top:123px" width="16" height="16" viewBox="0 0 16 16"><path d="M0.5 11l7.5 4.5l7.5-4.5" fill="none" stroke="#222" stroke-width="1" /><path d="M0.5 9.5l7.5 4.5l7.5-4.5" fill="none" stroke="#222" stroke-width="1" /><path d="M0.5 7.5l7.5-4.5l7.5 4.5l-7.5 4.5z" fill="#eef" stroke="#222" stroke-width="1" /><path d="M0.5 7.5v3.5M15.5 7.5v3.5" fill="none" stroke="#222" stroke-width="1" /><rect x="6.5" y="0" width="3" height="5" fill="#3a3a9a" shape-rendering="crispEdges"/><path d="M4 4.5h8l-4 4z" fill="#3a3a9a" /></svg><svg style="left:36px;top:123px" width="16" height="16" viewBox="0 0 16 16"><rect x="2" y="1" width="1" height="1" fill="#3a3a6a" shape-rendering="crispEdges"/><rect x="4" y="1" width="1" height="1" fill="#3a3a6a" shape-rendering="crispEdges"/><rect x="6" y="1" width="1" height="1" fill="#3a3a6a" shape-rendering="crispEdges"/><rect x="8" y="1" width="1" height="1" fill="#3a3a6a" shape-rendering="crispEdges"/><rect x="10" y="1" width="1" height="1" fill="#3a3a6a" shape-rendering="crispEdges"/><rect x="12" y="1" width="1" height="1" fill="#3a3a6a" shape-rendering="crispEdges"/><rect x="14" y="1" width="1" height="1" fill="#3a3a6a" shape-rendering="crispEdges"/><rect x="3" y="3" width="1" height="1" fill="#3a3a6a" shape-rendering="crispEdges"/><rect x="5" y="3" width="1" height="1" fill="#3a3a6a" shape-rendering="crispEdges"/><rect x="7" y="3" width="1" height="1" fill="#3a3a6a" shape-rendering="crispEdges"/><rect x="9" y="3" width="1" height="1" fill="#3a3a6a" shape-rendering="crispEdges"/><rect x="11" y="3" width="1" height="1" fill="#3a3a6a" shape-rendering="crispEdges"/><rect x="13" y="3" width="1" height="1" fill="#3a3a6a" shape-rendering="crispEdges"/><path d="M1.5 4v10.5h13v-10.5" fill="none" stroke="#222" stroke-width="1.3" /><rect x="2" y="14" width="12" height="1.3" fill="#222" shape-rendering="crispEdges"/><path d="M2.5 5h11v9h-11z" fill="#eeeef8" /><rect x="3" y="10" width="1" height="1" fill="#222" shape-rendering="crispEdges"/><rect x="5" y="10" width="1" height="1" fill="#222" shape-rendering="crispEdges"/><rect x="7" y="10" width="1" height="1" fill="#222" shape-rendering="crispEdges"/><rect x="9" y="10" width="1" height="1" fill="#222" shape-rendering="crispEdges"/><rect x="11" y="10" width="1" height="1" fill="#222" shape-rendering="crispEdges"/><rect x="13" y="10" width="1" height="1" fill="#222" shape-rendering="crispEdges"/><rect x="3" y="12" width="1" height="1" fill="#222" shape-rendering="crispEdges"/><rect x="5" y="12" width="1" height="1" fill="#222" shape-rendering="crispEdges"/><rect x="7" y="12" width="1" height="1" fill="#222" shape-rendering="crispEdges"/><rect x="9" y="12" width="1" height="1" fill="#222" shape-rendering="crispEdges"/><rect x="11" y="12" width="1" height="1" fill="#222" shape-rendering="crispEdges"/><rect x="13" y="12" width="1" height="1" fill="#222" shape-rendering="crispEdges"/><rect x="7.2" y="3" width="1.8" height="4" fill="#3a3a9a" shape-rendering="crispEdges"/><path d="M5.2 6h5.6l-2.8 3z" fill="#3a3a9a" /></svg><svg style="left:59px;top:123px" width="16" height="16" viewBox="0 0 16 16"><rect x="2" y="1" width="1" height="1" fill="#3a3a6a" shape-rendering="crispEdges"/><rect x="4" y="1" width="1" height="1" fill="#3a3a6a" shape-rendering="crispEdges"/><rect x="6" y="1" width="1" height="1" fill="#3a3a6a" shape-rendering="crispEdges"/><rect x="8" y="1" width="1" height="1" fill="#3a3a6a" shape-rendering="crispEdges"/><rect x="10" y="1" width="1" height="1" fill="#3a3a6a" shape-rendering="crispEdges"/><rect x="12" y="1" width="1" height="1" fill="#3a3a6a" shape-rendering="crispEdges"/><rect x="14" y="1" width="1" height="1" fill="#3a3a6a" shape-rendering="crispEdges"/><rect x="3" y="3" width="1" height="1" fill="#3a3a6a" shape-rendering="crispEdges"/><rect x="5" y="3" width="1" height="1" fill="#3a3a6a" shape-rendering="crispEdges"/><rect x="7" y="3" width="1" height="1" fill="#3a3a6a" shape-rendering="crispEdges"/><rect x="9" y="3" width="1" height="1" fill="#3a3a6a" shape-rendering="crispEdges"/><rect x="11" y="3" width="1" height="1" fill="#3a3a6a" shape-rendering="crispEdges"/><rect x="13" y="3" width="1" height="1" fill="#3a3a6a" shape-rendering="crispEdges"/><path d="M1.5 4v10.5h13v-10.5" fill="none" stroke="#222" stroke-width="1.3" /><rect x="2" y="14" width="12" height="1.3" fill="#222" shape-rendering="crispEdges"/><path d="M2.5 5h11v9h-11z" fill="#eeeef8" /><rect x="3" y="10" width="1" height="1" fill="#222" shape-rendering="crispEdges"/><rect x="5" y="10" width="1" height="1" fill="#222" shape-rendering="crispEdges"/><rect x="7" y="10" width="1" height="1" fill="#222" shape-rendering="crispEdges"/><rect x="9" y="10" width="1" height="1" fill="#222" shape-rendering="crispEdges"/><rect x="11" y="10" width="1" height="1" fill="#222" shape-rendering="crispEdges"/><rect x="13" y="10" width="1" height="1" fill="#222" shape-rendering="crispEdges"/><rect x="3" y="12" width="1" height="1" fill="#222" shape-rendering="crispEdges"/><rect x="5" y="12" width="1" height="1" fill="#222" shape-rendering="crispEdges"/><rect x="7" y="12" width="1" height="1" fill="#222" shape-rendering="crispEdges"/><rect x="9" y="12" width="1" height="1" fill="#222" shape-rendering="crispEdges"/><rect x="11" y="12" width="1" height="1" fill="#222" shape-rendering="crispEdges"/><rect x="13" y="12" width="1" height="1" fill="#222" shape-rendering="crispEdges"/><rect x="4.7" y="3" width="1.8" height="4" fill="#3a3a9a" shape-rendering="crispEdges"/><path d="M2.7 6h5.6l-2.8 3z" fill="#3a3a9a" /><rect x="10.2" y="3" width="1.8" height="4" fill="#3a3a9a" shape-rendering="crispEdges"/><path d="M8.2 6h5.6l-2.8 3z" fill="#3a3a9a" /></svg><svg style="left:82px;top:123px" width="16" height="16" viewBox="0 0 16 16"><path d="M1.5 8.5h13v6h-13z" fill="#ece9d8" stroke="#aca899" stroke-width="1.2" /><rect x="3" y="10" width="1" height="1" fill="#aca899" shape-rendering="crispEdges"/><rect x="5" y="10" width="1" height="1" fill="#aca899" shape-rendering="crispEdges"/><rect x="7" y="10" width="1" height="1" fill="#aca899" shape-rendering="crispEdges"/><rect x="9" y="10" width="1" height="1" fill="#aca899" shape-rendering="crispEdges"/><rect x="11" y="10" width="1" height="1" fill="#aca899" shape-rendering="crispEdges"/><rect x="13" y="10" width="1" height="1" fill="#aca899" shape-rendering="crispEdges"/><rect x="3" y="12" width="1" height="1" fill="#aca899" shape-rendering="crispEdges"/><rect x="5" y="12" width="1" height="1" fill="#aca899" shape-rendering="crispEdges"/><rect x="7" y="12" width="1" height="1" fill="#aca899" shape-rendering="crispEdges"/><rect x="9" y="12" width="1" height="1" fill="#aca899" shape-rendering="crispEdges"/><rect x="11" y="12" width="1" height="1" fill="#aca899" shape-rendering="crispEdges"/><rect x="13" y="12" width="1" height="1" fill="#aca899" shape-rendering="crispEdges"/><path d="M4 8l8-7.5" fill="none" stroke="#aca899" stroke-width="2" /><path d="M5 1.5l6 6.5" fill="none" stroke="#aca899" stroke-width="2" /></svg><div class="a sep" style="left:105px;top:120px;height:22px"></div><svg style="left:113px;top:123px" width="16" height="16" viewBox="0 0 16 16"><text x="0" y="6.5" font-family="Liberation Sans" font-size="6.5" fill="#aca899" textLength="16" lengthAdjust="spacingAndGlyphs">LOAD</text><path d="M1 8h5v3h2l-4.5 4.5l-3-3zM9 8h5v3h2l-4.5 4.5l-3-3z" fill="#aca899" /><path d="M4 9v3M12 9v3" fill="none" stroke="#ece9d8" stroke-width="0.8" /></svg><svg style="left:136px;top:123px" width="16" height="16" viewBox="0 0 16 16"><path d="M7 3l8 9.5" fill="none" stroke="#222" stroke-width="2.2" /><path d="M6.5 2.5l2 2" fill="none" stroke="#fff" stroke-width="1.2" /><rect x="10" y="0" width="1" height="1" fill="#555" shape-rendering="crispEdges"/><rect x="12" y="2" width="1" height="1" fill="#555" shape-rendering="crispEdges"/><rect x="14" y="1" width="1" height="1" fill="#555" shape-rendering="crispEdges"/><rect x="13" y="5" width="1" height="1" fill="#555" shape-rendering="crispEdges"/><rect x="9" y="2" width="1" height="1" fill="#555" shape-rendering="crispEdges"/><rect x="11" y="4" width="1" height="1" fill="#555" shape-rendering="crispEdges"/><path d="M5 6.5v3M5 9.5l-3 3.5M5 9.5l3 3.5" fill="none" stroke="#1a6a4a" stroke-width="1" /><path d="M4 5h2v2h-2zM1 12.5h2.4v2.4h-2.4zM6.6 12.5h2.4v2.4h-2.4z" fill="#fff" stroke="#1a6a4a" stroke-width="1" /></svg><svg style="left:359px;top:123px" width="16" height="16" viewBox="0 0 16 16"><path d="M5.5 2c0-2 5-2 5 0v6h-5z" fill="#e0409a" stroke="#8a1060" stroke-width="1" /><path d="M1.5 7.5h6.5v7h-6.5z" fill="#30e050" stroke="#2040b0" stroke-width="1.3" /><path d="M8.5 7.5h6v7h-6z" fill="#eef8ff" stroke="#2040b0" stroke-width="1.3" /><path d="M1.5 7.5l1.5-1.5h2.5M14.5 7.5l-1.5-1.5h-2.5" fill="none" stroke="#2040b0" stroke-width="1" /></svg><svg style="left:382px;top:123px" width="16" height="16" viewBox="0 0 16 16"><path d="M1.5 1.5h14v7h-14z" fill="#fff" stroke="#2a2a6a" stroke-width="1.4" /><rect x="3" y="3" width="1" height="1" fill="#222" shape-rendering="crispEdges"/><rect x="5" y="3" width="1" height="1" fill="#222" shape-rendering="crispEdges"/><rect x="7" y="3" width="1" height="1" fill="#222" shape-rendering="crispEdges"/><rect x="9" y="3" width="1" height="1" fill="#222" shape-rendering="crispEdges"/><rect x="11" y="3" width="1" height="1" fill="#222" shape-rendering="crispEdges"/><rect x="13" y="3" width="1" height="1" fill="#222" shape-rendering="crispEdges"/><rect x="3" y="5" width="1" height="1" fill="#222" shape-rendering="crispEdges"/><rect x="5" y="5" width="1" height="1" fill="#222" shape-rendering="crispEdges"/><rect x="7" y="5" width="1" height="1" fill="#222" shape-rendering="crispEdges"/><rect x="9" y="5" width="1" height="1" fill="#222" shape-rendering="crispEdges"/><rect x="11" y="5" width="1" height="1" fill="#222" shape-rendering="crispEdges"/><rect x="13" y="5" width="1" height="1" fill="#222" shape-rendering="crispEdges"/><rect x="4" y="7" width="9" height="1" fill="#222" shape-rendering="crispEdges"/><rect x="2.5" y="11" width="2.6" height="2.6" fill="#a0401a" shape-rendering="crispEdges"/><rect x="7" y="11" width="2.6" height="2.6" fill="#a0401a" shape-rendering="crispEdges"/><rect x="11.5" y="11" width="2.6" height="2.6" fill="#a0401a" shape-rendering="crispEdges"/></svg>
<div class="a sunk" style="left:156px;top:120px;width:198px;height:23px"></div><div class="a tx " style="left:159px;top:123px;white-space:pre;letter-spacing:-0.055px;font-size:14px;font-weight:bold">Target 1</div><div class="a btn" style="left:336px;top:122px;width:16px;height:19px"></div><svg style="left:340px;top:129px" width="7" height="4" viewBox="0 0 7 4"><path d="M0 0h7l-3.5 4z" fill="#000" /></svg>
<div class="a" style="left:0;top:145px;width:186px;height:1px;background:#bdb9a6"></div><div class="a" style="left:0;top:146px;width:185px;height:1px;background:#f8f7f1"></div><div class="a" style="left:2px;top:147px;width:176px;height:15px;border:1px solid #aca899;border-radius:2px;background:#ece9d8"></div><div class="a tx " style="left:5.5px;top:147px;white-space:pre;letter-spacing:-0.359px;font-size:11px;line-height:14px">Project Workspace</div><svg style="left:154px;top:152px" width="7" height="4" viewBox="0 0 7 4"><path d="M0 0h7l-3.5 4z" fill="#aca899" /></svg><svg style="left:166px;top:151px" width="7" height="7" viewBox="0 0 7 7"><path d="M0.8 0.8l5.4 5.4M6.2 0.8l-5.4 5.4" fill="none" stroke="#000" stroke-width="1.7" /></svg><div class="a" style="left:4px;top:165px;width:172px;height:387px;border:1px solid #aca899;background:#fff"></div><div class="a" style="left:19px;top:174px;width:7px;height:1px;background-image:linear-gradient(to right,#a0a0a0 50%,transparent 50%);background-size:2px 1px"></div><div class="a" style="left:35px;top:182px;width:1px;height:4px;background-image:linear-gradient(to bottom,#a0a0a0 50%,transparent 50%);background-size:1px 2px"></div><div class="a" style="left:40px;top:190px;width:7px;height:1px;background-image:linear-gradient(to right,#a0a0a0 50%,transparent 50%);background-size:2px 1px"></div><div class="a" style="left:56px;top:198px;width:1px;height:25px;background-image:linear-gradient(to bottom,#a0a0a0 50%,transparent 50%);background-size:1px 2px"></div><div class="a" style="left:56px;top:206px;width:14px;height:1px;background-image:linear-gradient(to right,#a0a0a0 50%,transparent 50%);background-size:2px 1px"></div><div class="a" style="left:56px;top:222px;width:14px;height:1px;background-image:linear-gradient(to right,#a0a0a0 50%,transparent 50%);background-size:2px 1px"></div><svg style="left:10px;top:170px" width="9" height="9" viewBox="0 0 9 9"><rect x="0" y="0" width="9" height="9" fill="#808080" shape-rendering="crispEdges"/><rect x="1" y="1" width="7" height="7" fill="#fff" shape-rendering="crispEdges"/><rect x="2" y="4" width="5" height="1" fill="#000" shape-rendering="crispEdges"/></svg><svg style="left:31px;top:186px" width="9" height="9" viewBox="0 0 9 9"><rect x="0" y="0" width="9" height="9" fill="#808080" shape-rendering="crispEdges"/><rect x="1" y="1" width="7" height="7" fill="#fff" shape-rendering="crispEdges"/><rect x="2" y="4" width="5" height="1" fill="#000" shape-rendering="crispEdges"/></svg><svg style="left:25px;top:166px" width="18" height="16" viewBox="0 0 18 16"><rect x="1" y="1" width="3" height="3.4" fill="#7a0c0c" shape-rendering="crispEdges"/><rect x="1" y="5.4" width="3" height="3.4" fill="#7a0c0c" shape-rendering="crispEdges"/><rect x="1" y="9.8" width="3" height="3.4" fill="#7a0c0c" shape-rendering="crispEdges"/><g transform="translate(4,0)"><path d="M1.5 2.5h4l1 1.5h5.5v8h-10.5z" fill="#fbfbc8" stroke="#8a8a50" stroke-width="1" /><path d="M0.5 6.5h9.5l3 6h-10z" fill="#e6e664" stroke="#6a6a30" stroke-width="1" /><path d="M12 4v8.5M2.5 12.8h11" fill="none" stroke="#000" stroke-width="1.4" /><path d="M10 6.5l3 6" fill="none" stroke="#000" stroke-width="1.2" /></g></svg><svg style="left:47px;top:182px" width="17" height="16" viewBox="0 0 17 16"><g transform="translate(1,0)"><path d="M1.5 2.5h4l1 1.5h5.5v8h-10.5z" fill="#fbfbc8" stroke="#8a8a50" stroke-width="1" /><path d="M0.5 6.5h9.5l3 6h-10z" fill="#e6e664" stroke="#6a6a30" stroke-width="1" /><path d="M12 4v8.5M2.5 12.8h11" fill="none" stroke="#000" stroke-width="1.4" /><path d="M10 6.5l3 6" fill="none" stroke="#000" stroke-width="1.2" /></g></svg><svg style="left:71px;top:199px" width="14" height="15" viewBox="0 0 14 15"><path d="M0.5 0.5h8.5l3.5 3.5v9.5h-12z" fill="#fff" stroke="#555" stroke-width="1" /><path d="M9 0.5v3.5h3.5" fill="none" stroke="#555" stroke-width="1" /><path d="M13 4.5v9.7h-12" fill="none" stroke="#000" stroke-width="1.4" /><path d="M6.5 2v5" fill="none" stroke="#000060" stroke-width="1.6" /><path d="M3.3 5.2l3.2 3.3l3.2-3.3z" fill="#000060" /><rect x="3" y="9.5" width="1" height="1" fill="#222" shape-rendering="crispEdges"/><rect x="3" y="11.5" width="1" height="1" fill="#222" shape-rendering="crispEdges"/><rect x="5" y="9.5" width="1" height="1" fill="#222" shape-rendering="crispEdges"/><rect x="5" y="11.5" width="1" height="1" fill="#222" shape-rendering="crispEdges"/><rect x="7" y="9.5" width="1" height="1" fill="#222" shape-rendering="crispEdges"/><rect x="7" y="11.5" width="1" height="1" fill="#222" shape-rendering="crispEdges"/><rect x="9" y="9.5" width="1" height="1" fill="#222" shape-rendering="crispEdges"/><rect x="9" y="11.5" width="1" height="1" fill="#222" shape-rendering="crispEdges"/></svg><svg style="left:71px;top:215px" width="14" height="15" viewBox="0 0 14 15"><path d="M0.5 0.5h8.5l3.5 3.5v9.5h-12z" fill="#fff" stroke="#555" stroke-width="1" /><path d="M9 0.5v3.5h3.5" fill="none" stroke="#555" stroke-width="1" /><path d="M13 4.5v9.7h-12" fill="none" stroke="#000" stroke-width="1.4" /><path d="M6.5 2v5" fill="none" stroke="#000060" stroke-width="1.6" /><path d="M3.3 5.2l3.2 3.3l3.2-3.3z" fill="#000060" /><rect x="3" y="9.5" width="1" height="1" fill="#222" shape-rendering="crispEdges"/><rect x="3" y="11.5" width="1" height="1" fill="#222" shape-rendering="crispEdges"/><rect x="5" y="9.5" width="1" height="1" fill="#222" shape-rendering="crispEdges"/><rect x="5" y="11.5" width="1" height="1" fill="#222" shape-rendering="crispEdges"/><rect x="7" y="9.5" width="1" height="1" fill="#222" shape-rendering="crispEdges"/><rect x="7" y="11.5" width="1" height="1" fill="#222" shape-rendering="crispEdges"/><rect x="9" y="9.5" width="1" height="1" fill="#222" shape-rendering="crispEdges"/><rect x="9" y="11.5" width="1" height="1" fill="#222" shape-rendering="crispEdges"/></svg><div class="a" style="left:47px;top:166px;width:46px;height:16px;background:#ece9d8"></div><div class="a tx " style="left:48.5px;top:166px;white-space:pre;letter-spacing:0.031px;font-size:11px;line-height:16px">Target 1</div><div class="a tx " style="left:68.5px;top:182px;white-space:pre;letter-spacing:-0.261px;font-size:11px;line-height:16px">Source Group 1</div><div class="a tx " style="left:89.5px;top:198px;white-space:pre;letter-spacing:-0.322px;font-size:11px;line-height:16px">STARTUP.A51</div><div class="a tx " style="left:89.5px;top:214px;white-space:pre;letter-spacing:0.371px;font-size:11px;line-height:16px">test4.c</div>
<div class="a" style="left:4px;top:554px;width:172px;height:24px;background:#fff;border-top:1px solid #000"></div><div class="a" style="left:12px;top:553px;width:30px;height:24px;background:#ece9d8;border-bottom:1px solid #000;border-right:1px solid #000"></div><div class="a" style="left:72px;top:558px;width:1px;height:17px;background:#aca899"></div><div class="a" style="left:103px;top:558px;width:1px;height:17px;background:#aca899"></div><div class="a" style="left:134px;top:558px;width:1px;height:17px;background:#aca899"></div><div class="a" style="left:169px;top:558px;width:1px;height:17px;background:#aca899"></div><svg style="left:18px;top:558px" width="14" height="15" viewBox="0 0 14 15"><path d="M0.5 0.5h9l4 4v10h-13z" fill="#fff" stroke="#3c1c50" stroke-width="1.4" /><path d="M9.5 0.5v4h4" fill="none" stroke="#3c1c50" stroke-width="1" /><rect x="3" y="5" width="8" height="1.3" fill="#222" shape-rendering="crispEdges"/><rect x="3" y="7.5" width="8" height="1.3" fill="#222" shape-rendering="crispEdges"/><rect x="3" y="10" width="8" height="1.3" fill="#222" shape-rendering="crispEdges"/><path d="M0 15h14" fill="none" stroke="#60c8d8" stroke-width="1" /><path d="M13.8 5v10" fill="none" stroke="#c040c0" stroke-width="0.8" /></svg><svg style="left:51px;top:559px" width="14" height="12" viewBox="0 0 14 12"><rect x="0" y="0" width="13" height="3" fill="#1428b4" shape-rendering="crispEdges"/><rect x="1" y="1" width="1" height="1" fill="#a8b8ff" shape-rendering="crispEdges"/><rect x="3" y="1" width="1" height="1" fill="#a8b8ff" shape-rendering="crispEdges"/><rect x="5" y="1" width="1" height="1" fill="#a8b8ff" shape-rendering="crispEdges"/><rect x="7" y="1" width="1" height="1" fill="#a8b8ff" shape-rendering="crispEdges"/><rect x="9" y="1" width="1" height="1" fill="#a8b8ff" shape-rendering="crispEdges"/><rect x="11" y="1" width="1" height="1" fill="#a8b8ff" shape-rendering="crispEdges"/><rect x="0" y="4" width="13" height="3" fill="#1428b4" shape-rendering="crispEdges"/><rect x="1" y="5" width="1" height="1" fill="#a8b8ff" shape-rendering="crispEdges"/><rect x="3" y="5" width="1" height="1" fill="#a8b8ff" shape-rendering="crispEdges"/><rect x="5" y="5" width="1" height="1" fill="#a8b8ff" shape-rendering="crispEdges"/><rect x="7" y="5" width="1" height="1" fill="#a8b8ff" shape-rendering="crispEdges"/><rect x="9" y="5" width="1" height="1" fill="#a8b8ff" shape-rendering="crispEdges"/><rect x="11" y="5" width="1" height="1" fill="#a8b8ff" shape-rendering="crispEdges"/><rect x="0" y="8" width="13" height="3" fill="#1428b4" shape-rendering="crispEdges"/><rect x="1" y="9" width="1" height="1" fill="#a8b8ff" shape-rendering="crispEdges"/><rect x="3" y="9" width="1" height="1" fill="#a8b8ff" shape-rendering="crispEdges"/><rect x="5" y="9" width="1" height="1" fill="#a8b8ff" shape-rendering="crispEdges"/><rect x="7" y="9" width="1" height="1" fill="#a8b8ff" shape-rendering="crispEdges"/><rect x="9" y="9" width="1" height="1" fill="#a8b8ff" shape-rendering="crispEdges"/><rect x="11" y="9" width="1" height="1" fill="#a8b8ff" shape-rendering="crispEdges"/></svg><svg style="left:80px;top:557px" width="17" height="16" viewBox="0 0 17 16"><path d="M6 3l7-0.5v9.5l-7 1.5z" fill="#f6ecb0" stroke="#300040" stroke-width="1.2" /><path d="M1 3.5l3-3l2 2.5v10.5l-2 1l-3-2.5z" fill="#fff" stroke="#300040" stroke-width="1.3" /><path d="M4 14.8l10.5-1.5v-9.5" fill="none" stroke="#300040" stroke-width="1.6" /><path d="M4 0.8v13.5" fill="none" stroke="#705080" stroke-width="0.7" /></svg><svg style="left:110px;top:558px" width="16" height="14" viewBox="0 0 16 14"><path d="M0 3h3.5v-2.5l3.5 3.5l-3.5 3.5v-2.5h-3.5z" fill="#000080" /><text x="6" y="11" font-family="Liberation Mono" font-weight="bold" font-size="13" fill="#0000d0" stroke="#0000d0" stroke-width="0.4" textLength="10" lengthAdjust="spacingAndGlyphs">{}</text></svg><svg style="left:141px;top:558px" width="18" height="15" viewBox="0 0 18 15"><path d="M1 1h14v7h-14z" fill="#fff" stroke="#222" stroke-width="1" /><rect x="3" y="3" width="1" height="1" fill="#222" shape-rendering="crispEdges"/><rect x="5" y="3" width="1" height="1" fill="#222" shape-rendering="crispEdges"/><rect x="7" y="3" width="1" height="1" fill="#222" shape-rendering="crispEdges"/><rect x="9" y="3" width="1" height="1" fill="#222" shape-rendering="crispEdges"/><rect x="11" y="3" width="1" height="1" fill="#222" shape-rendering="crispEdges"/><rect x="13" y="3" width="1" height="1" fill="#222" shape-rendering="crispEdges"/><rect x="3" y="5" width="1" height="1" fill="#222" shape-rendering="crispEdges"/><rect x="5" y="5" width="1" height="1" fill="#222" shape-rendering="crispEdges"/><rect x="7" y="5" width="1" height="1" fill="#222" shape-rendering="crispEdges"/><rect x="9" y="5" width="1" height="1" fill="#222" shape-rendering="crispEdges"/><rect x="11" y="5" width="1" height="1" fill="#222" shape-rendering="crispEdges"/><rect x="13" y="5" width="1" height="1" fill="#222" shape-rendering="crispEdges"/><rect x="3" y="7" width="10" height="1" fill="#222" shape-rendering="crispEdges"/><path d="M6 8l5 6M8 8l4 5" fill="none" stroke="#222" stroke-width="1" /><rect x="15" y="12" width="1" height="1" fill="#222" shape-rendering="crispEdges"/></svg>
<div class="a" style="left:185px;top:147px;width:1px;height:433px;background:#000"></div><div class="a" style="left:186px;top:147px;width:1px;height:433px;background:#808080"></div><div class="a" style="left:180px;top:147px;width:2px;height:433px;background:#f6f4ec"></div><div class="a" style="left:188px;top:147px;width:832px;height:407px;border:1px solid;border-color:#808080 #fff #fff #808080;background:#ece9d8"></div><div class="a" style="left:189px;top:148px;width:830px;height:405px;border:1px solid;border-color:#808080 #ece9d8 #ece9d8 #808080"></div><div class="a" style="left:190px;top:149px;width:827px;height:403px;border:1px solid;border-color:#000 #d4d0c8 #d4d0c8 #000;background:#fff"></div><div class="a dith" style="left:191px;top:150px;width:46px;height:384px"></div><div class="a ln" style="left:206px;top:150px"><i>1</i><i>7</i>
<i>1</i><i>8</i>
<i>1</i><i>9</i>
<i>2</i><i>0</i>
<i>2</i><i>1</i>
<i>2</i><i>2</i>
<i>2</i><i>3</i>
<i>2</i><i>4</i>
<i>2</i><i>5</i>
<i>2</i><i>6</i>
<i>2</i><i>7</i>
<i>2</i><i>8</i>
<i>2</i><i>9</i>
<i>3</i><i>0</i>
<i>3</i><i>1</i>
<i>3</i><i>2</i>
<i>3</i><i>3</i>
<i>3</i><i>4</i>
<i>3</i><i>5</i>
<i>3</i><i>6</i>
<i>3</i><i>7</i>
<i>3</i><i>8</i>
<i>3</i><i>9</i>
<i>4</i><i>0</i></div><div class="a code" style="left:237px;top:151px">
void xuli(unsinged char byte)
{
hangchuc<span class="o">=</span>(byte/<span class="n">10</span>)<span class="s">;</span>
hangdonvi<span class="o">=</span>(byte%<span class="n">10</span>)<span class="s">;</span>
hangchuc<span class="o">=</span>hangchuc&lt;&lt;<span class="n">4</span><span class="s">;</span>
giatrihienthi<span class="o">=</span>hangchuc|hangdonvi<span class="s">;</span>

}

void main(void)
{
int <span class="k">a</span><span class="s">;</span>

TMOD<span class="o">=</span><span class="n">0x01</span><span class="s">;</span>
<span class="k">a</span><span class="o">=</span><span class="n">35</span><span class="s">;</span>
While(<span class="n">1</span>)
{
xuli(<span class="k">a</span>)<span class="s">;</span>
P0<span class="o">=</span>giatrihienthi<span class="s">;</span>
Delay()<span class="s">;</span>
<span class="k">a</span><span class="o">=</span><span class="k">a</span>-<span class="n">1</span><span class="s">;</span>
}
}</div>
<div class="a dith2" style="left:1000px;top:150px;width:17px;height:384px"></div><div class="a btn" style="left:1000px;top:150px;width:17px;height:7px"></div><div class="a btn" style="left:1000px;top:157px;width:17px;height:17px"></div><svg style="left:1005px;top:163px" width="7" height="4" viewBox="0 0 7 4"><path d="M0 4h7l-3.5-4z" fill="#000" /></svg><div class="a btn" style="left:1000px;top:311px;width:17px;height:206px"></div><div class="a btn" style="left:1000px;top:517px;width:17px;height:17px"></div><svg style="left:1005px;top:524px" width="7" height="4" viewBox="0 0 7 4"><path d="M0 0h7l-3.5 4z" fill="#000" /></svg><div class="a dith2" style="left:191px;top:534px;width:809px;height:17px"></div><div class="a btn" style="left:191px;top:534px;width:7px;height:17px;border-right-color:#000"></div><div class="a btn" style="left:198px;top:534px;width:17px;height:17px"></div><svg style="left:204px;top:539px" width="4" height="7" viewBox="0 0 4 7"><path d="M4 0v7l-4-3.5z" fill="#000" /></svg><div class="a btn" style="left:215px;top:534px;width:36px;height:17px"></div><div class="a btn" style="left:983px;top:534px;width:17px;height:17px"></div><svg style="left:990px;top:539px" width="4" height="7" viewBox="0 0 4 7"><path d="M0 0v7l4-3.5z" fill="#000" /></svg><div class="a" style="left:1000px;top:534px;width:17px;height:17px;background:#ece9d8"></div>
<div class="a" style="left:279px;top:556px;width:745px;height:25px;background:#fff;border-left:1px solid #000"></div><div class="a" style="left:279px;top:556px;width:741px;height:1px;background:#000"></div><div class="a" style="left:190px;top:578px;width:90px;height:1px;background:#000"></div><div class="a" style="left:190px;top:581px;width:834px;height:1px;background:#aca899"></div><svg style="left:193px;top:562px" width="14" height="15" viewBox="0 0 14 15"><path d="M0.5 0.5h9l4 4v10h-13z" fill="#fff" stroke="#3c1c50" stroke-width="1.4" /><path d="M9.5 0.5v4h4" fill="none" stroke="#3c1c50" stroke-width="1" /><rect x="3" y="5" width="8" height="1.3" fill="#222" shape-rendering="crispEdges"/><rect x="3" y="7.5" width="8" height="1.3" fill="#222" shape-rendering="crispEdges"/><rect x="3" y="10" width="8" height="1.3" fill="#222" shape-rendering="crispEdges"/><path d="M0 15h14" fill="none" stroke="#60c8d8" stroke-width="1" /><path d="M13.8 5v10" fill="none" stroke="#c040c0" stroke-width="0.8" /></svg><div class="a tx " style="left:230.5px;top:563px;white-space:pre;letter-spacing:-0.059px;font-size:11px;line-height:14px">Text1</div>
<div class="a" style="left:0;top:587px;width:1024px;height:1px;background:#000"></div><div class="a" style="left:0;top:588px;width:1024px;height:1px;background:#808080"></div><div class="a" style="left:0;top:583px;width:1024px;height:1px;background:#fff"></div><div class="a" style="left:3px;top:591px;width:14px;height:125px;border:1px solid #aca899;border-radius:2px"></div><svg style="left:7px;top:595px" width="7" height="7" viewBox="0 0 7 7"><path d="M0.8 0.8l5.4 5.4M6.2 0.8l-5.4 5.4" fill="none" stroke="#000" stroke-width="1.7" /></svg><svg style="left:10px;top:608px" width="4" height="7" viewBox="0 0 4 7"><path d="M0 0.5v6l3-3z" fill="#aca899" /></svg><div class="a tx " style="left:4.5px;top:712px;white-space:pre;letter-spacing:-0.400px;font-size:11px;line-height:12px;transform-origin:0 0;transform:rotate(-90deg)">Output Window</div><div class="a" style="left:18px;top:591px;width:1004px;height:124px;border:1px solid;border-color:#808080 #fff #fff #808080;background:#ece9d8"></div><div class="a" style="left:19px;top:592px;width:1002px;height:122px;border:1px solid;border-color:#404040 #d4d0c8 #d4d0c8 #404040;background:#fff"></div><div class="a out" style="left:22px;top:595px">compiling test4.c...
*** WARNING C318 IN LINE 2 OF test4.c: can't open file 'AT89X51.H'
TEST4.C(18): error C141: syntax error near 'char', expected ')'
TEST4.C(20): error C202: 'byte': undefined identifier
TEST4.C(21): error C202: 'byte': undefined identifier
Target not created</div><div class="a dith2" style="left:1002px;top:593px;width:17px;height:103px"></div><div class="a btn" style="left:1002px;top:593px;width:17px;height:17px"></div><svg style="left:1007px;top:599px" width="7" height="4" viewBox="0 0 7 4"><path d="M0 4h7l-3.5-4z" fill="#000" /></svg><div class="a btn" style="left:1002px;top:662px;width:17px;height:17px"></div><div class="a btn" style="left:1002px;top:679px;width:17px;height:17px"></div><svg style="left:1007px;top:686px" width="7" height="4" viewBox="0 0 7 4"><path d="M0 0h7l-3.5 4z" fill="#000" /></svg><div class="a" style="left:20px;top:696px;width:1000px;height:17px;background:#ece9d8"></div><div class="a" style="left:20px;top:696px;width:659px;height:1px;background:#000"></div><div class="a btn" style="left:20px;top:697px;width:17px;height:16px;border-right-color:#808080;border-bottom-color:#808080;box-shadow:none"></div><div class="a" style="left:37px;top:697px;width:1px;height:16px;background:#000"></div><svg style="left:24px;top:701px" width="9" height="8" viewBox="0 0 9 8"><path d="M0 0h1.5v8h-1.5zM8 0v8l-5-4z" fill="#aca899" /></svg><div class="a btn" style="left:38px;top:697px;width:17px;height:16px;border-right-color:#808080;border-bottom-color:#808080;box-shadow:none"></div><div class="a" style="left:55px;top:697px;width:1px;height:16px;background:#000"></div><svg style="left:42px;top:701px" width="9" height="8" viewBox="0 0 9 8"><path d="M7 0v8l-5-4z" fill="#aca899" /></svg><div class="a btn" style="left:56px;top:697px;width:17px;height:16px;border-right-color:#808080;border-bottom-color:#808080;box-shadow:none"></div><div class="a" style="left:73px;top:697px;width:1px;height:16px;background:#000"></div><svg style="left:60px;top:701px" width="9" height="8" viewBox="0 0 9 8"><path d="M2 0v8l5-4z" fill="#aca899" /></svg><div class="a btn" style="left:74px;top:697px;width:17px;height:16px;border-right-color:#808080;border-bottom-color:#808080;box-shadow:none"></div><div class="a" style="left:91px;top:697px;width:1px;height:16px;background:#000"></div><svg style="left:78px;top:701px" width="9" height="8" viewBox="0 0 9 8"><path d="M7.5 0h1.5v8h-1.5zM1 0v8l5-4z" fill="#aca899" /></svg><svg style="left:91px;top:696px" width="210" height="18" viewBox="0 0 210 18"><path d="M0 0h48v1.5l-5 15.5h-37l-5-16z" fill="#fff"/><path d="M1 0.5L6 16.5H42.5L47.5 0.5" stroke="#000" fill="none"/><path d="M45.8 6L49.5 16.5H114.5L118.5 0.5" stroke="#000" fill="none" stroke-width="0.9"/><path d="M117 6L120.5 16.5H193L198 0.5" stroke="#000" fill="none" stroke-width="0.9"/><path d="M49.5 17.5H114M120.5 17.5H193" stroke="#fff" fill="none" stroke-width="1"/></svg><div class="a tx " style="left:100.5px;top:698px;white-space:pre;letter-spacing:-0.100px;font-size:11px;font-weight:bold;line-height:14px">Build</div><div class="a tx " style="left:147.5px;top:698px;white-space:pre;letter-spacing:-0.536px;font-size:11px;line-height:14px">Command</div><div class="a tx " style="left:218.5px;top:698px;white-space:pre;letter-spacing:-0.254px;font-size:11px;line-height:14px">Find in Files</div><div class="a" style="left:678px;top:696px;width:1px;height:17px;background:#000"></div><div class="a" style="left:682px;top:696px;width:1px;height:17px;background:#000"></div><div class="a dith2" style="left:683px;top:696px;width:320px;height:17px"></div><div class="a btn" style="left:683px;top:696px;width:17px;height:17px"></div><svg style="left:689px;top:701px" width="4" height="7" viewBox="0 0 4 7"><path d="M4 0v7l-4-3.5z" fill="#000" /></svg><div class="a btn" style="left:700px;top:696px;width:286px;height:17px"></div><div class="a btn" style="left:986px;top:696px;width:17px;height:17px"></div><svg style="left:993px;top:701px" width="4" height="7" viewBox="0 0 4 7"><path d="M0 0v7l4-3.5z" fill="#000" /></svg>
<div class="a" style="left:0;top:718px;width:1024px;height:1px;background:#aca899"></div><div class="a" style="left:636px;top:722px;width:141px;height:16px;border:1px solid;border-color:#aca899 #fff #fff #aca899"></div><div class="a" style="left:779px;top:722px;width:91px;height:16px;border:1px solid;border-color:#aca899 #fff #fff #aca899"></div><div class="a tx " style="left:780.5px;top:723px;white-space:pre;letter-spacing:0.144px;font-size:11px;line-height:13px">L:27 C:25</div><div class="a" style="left:873px;top:722px;width:26px;height:16px;border:1px solid;border-color:#aca899 #fff #fff #aca899"></div><div class="a" style="left:902px;top:722px;width:27px;height:16px;border:1px solid;border-color:#aca899 #fff #fff #aca899"></div><div class="a tx " style="left:903.5px;top:723px;white-space:pre;letter-spacing:-0.354px;font-size:11px;line-height:13px">NUM</div><div class="a" style="left:932px;top:722px;width:30px;height:16px;border:1px solid;border-color:#aca899 #fff #fff #aca899"></div><div class="a" style="left:965px;top:722px;width:26px;height:16px;border:1px solid;border-color:#aca899 #fff #fff #aca899"></div><div class="a" style="left:994px;top:722px;width:28px;height:16px;border:1px solid;border-color:#aca899 #fff #fff #aca899"></div><div class="a tx " style="left:995.5px;top:723px;white-space:pre;letter-spacing:0.536px;font-size:11px;line-height:13px">R/W</div>
<div class="a" style="left:0;top:738px;width:1024px;height:30px;background:linear-gradient(to bottom,#3168d5 0%,#4993e6 4%,#3a81e3 9%,#2b71dc 14%,#2663d6 20%,#245cd4 30%,#245ddb 55%,#2663e0 80%,#245fdc 88%,#1f55ce 94%,#1941a5 100%)"></div><div class="a" style="left:0;top:738px;width:97px;height:30px;border-radius:0 9px 9px 0/0 14px 16px 0;background:linear-gradient(to bottom,#2d7a2d 0%,#5fb55a 6%,#48a144 14%,#3a9438 25%,#38913a 50%,#3a9a3a 75%,#338a33 90%,#256e25 100%);box-shadow:1px 0 2px #1a3f9a"></div><svg style="left:10px;top:744px" width="19" height="17" viewBox="0 0 19 17"><g transform="skewX(-8) translate(3,0)"><path d="M1 2c2.5-1.5 5-1.5 7.5 0l-1 6c-2.5-1.5-5-1.5-7.5 0z" fill="#e8552a" /><path d="M9.5 2.3c2.5 1.5 5 1.5 7.5 0l-1 6c-2.5 1.5-5 1.5-7.5 0z" fill="#7ac043" /><path d="M-0.5 9.5c2.5-1.5 5-1.5 7.5 0l-1 6c-2.5-1.5-5-1.5-7.5 0z" fill="#4a8ee8" /><path d="M8 9.8c2.5 1.5 5 1.5 7.5 0l-1 6c-2.5 1.5-5 1.5-7.5 0z" fill="#f5c232" /></g></svg><div class="a tx " style="left:33px;top:742px;white-space:pre;letter-spacing:0.628px;font-size:17px;font-weight:bold;font-style:italic;color:#fff;text-shadow:1px 1px 2px #1d4a1d">start</div><svg style="left:109px;top:745px" width="16" height="16" viewBox="0 0 16 16"><circle cx="8.5" cy="8.5" r="6.5" fill="#2a9df0"/><path d="M4.5 8.5h8c0-5-8-5-8 0c0 5 6 5 7.5 2" fill="none" stroke="#9ad8ff" stroke-width="2" /><ellipse cx="8" cy="8" rx="8.5" ry="3.2" fill="none" stroke="#f0c428" stroke-width="1.4" transform="rotate(-35 8 8)"/></svg><svg style="left:132px;top:745px" width="16" height="16" viewBox="0 0 16 16"><circle cx="8" cy="8" r="7.5" fill="#e8761a"/><circle cx="9" cy="7" r="5.4" fill="#2a5ac8"/><path d="M1 6c1-3 3-5 5-5c-2 1.5-2.5 3.5-1.5 5.5c1 2 4.5 1.5 4.5 3.5c0 2-3 3-5 2c-3-1-3.5-3-3-6z" fill="#f08a20" /><path d="M6 4c1-1 3-1 4 0c-1 0-2 1-1.5 2.5" fill="none" stroke="#8ad0f0" stroke-width="1" /><path d="M2 11c2 4 9 5 12-1c-2 3-8 4-12 1z" fill="#c8481a" /></svg><svg style="left:155px;top:745px" width="16" height="16" viewBox="0 0 16 16"><path d="M2.5 2.5c0-1.5 1-2 2-2h7c1.5 0 2 1 2 2v9c0 1.5-1 2-2 2h-7c-1.5 0-2-1-2-2z" fill="#fff" stroke="#b8d8f8" stroke-width="1" /><rect x="5" y="4" width="6" height="7" fill="#cfe4f8" shape-rendering="crispEdges"/><path d="M6 8h4M8.5 5.5l3-3" fill="none" stroke="#234" stroke-width="1.2" /><path d="M11 1l3 1.5l-2 1z" fill="#e8c040" /><path d="M3 13.5h10l1.5-2" fill="none" stroke="#103a8a" stroke-width="1.4" /></svg><svg style="left:182px;top:745px" width="9" height="7" viewBox="0 0 9 7"><path d="M0.5 0.5l3 3l-3 3M4.5 0.5l3 3l-3 3" fill="none" stroke="#a8c8f8" stroke-width="1.3"/></svg><div class="a" style="left:199px;top:741px;width:151px;height:24px;border-radius:3px;background:linear-gradient(to bottom,#5e9bf0 0%,#3c82ea 8%,#3a80e8 50%,#337ae3 85%,#2b6bd2 100%);box-shadow:inset 0 1px 0 #78aef5"></div><svg style="left:208px;top:745px" width="16" height="16" viewBox="0 0 16 16"><circle cx="8" cy="8" r="7.5" fill="#e8761a"/><circle cx="9" cy="7" r="5.4" fill="#2a5ac8"/><path d="M1 6c1-3 3-5 5-5c-2 1.5-2.5 3.5-1.5 5.5c1 2 4.5 1.5 4.5 3.5c0 2-3 3-5 2c-3-1-3.5-3-3-6z" fill="#f08a20" /><path d="M6 4c1-1 3-1 4 0c-1 0-2 1-1.5 2.5" fill="none" stroke="#8ad0f0" stroke-width="1" /><path d="M2 11c2 4 9 5 12-1c-2 3-8 4-12 1z" fill="#c8481a" /></svg><div class="a tx " style="left:226.5px;top:746px;white-space:pre;letter-spacing:0.076px;font-size:11px;line-height:14px;color:#fff">viết Function có chứ...</div><div class="a" style="left:352px;top:741px;width:151px;height:24px;border-radius:3px;background:linear-gradient(to bottom,#5e9bf0 0%,#3c82ea 8%,#3a80e8 50%,#337ae3 85%,#2b6bd2 100%);box-shadow:inset 0 1px 0 #78aef5"></div><svg style="left:361px;top:745px" width="16" height="16" viewBox="0 0 16 16"><path d="M4.5 0.5h10v14h-10z" fill="#fff" stroke="#8090b0" stroke-width="1" /><rect x="6" y="3" width="7" height="1" fill="#99a" shape-rendering="crispEdges"/><rect x="6" y="5" width="7" height="1" fill="#99a" shape-rendering="crispEdges"/><rect x="6" y="7" width="7" height="1" fill="#99a" shape-rendering="crispEdges"/><rect x="6" y="9" width="7" height="1" fill="#99a" shape-rendering="crispEdges"/><rect x="6" y="11" width="7" height="1" fill="#99a" shape-rendering="crispEdges"/><rect x="0" y="3" width="10" height="9" fill="#2a4a9a" shape-rendering="crispEdges"/><text x="0.5" y="11" font-family="Liberation Sans" font-weight="bold" font-size="9.5" fill="#fff" textLength="9" lengthAdjust="spacingAndGlyphs">W</text></svg><div class="a tx " style="left:379.5px;top:746px;white-space:pre;letter-spacing:-0.058px;font-size:11px;line-height:14px;color:#fff">Doc1 - Microsoft Word</div><div class="a" style="left:505px;top:741px;width:151px;height:24px;border-radius:3px;background:linear-gradient(to bottom,#5e9bf0 0%,#3c82ea 8%,#3a80e8 50%,#337ae3 85%,#2b6bd2 100%);box-shadow:inset 0 1px 0 #78aef5"></div><svg style="left:514px;top:745px" width="16" height="16" viewBox="0 0 16 16"><ellipse cx="9.5" cy="4.5" rx="6" ry="4" fill="#f4f8ff" stroke="#8aa0c0" stroke-width="0.8"/><path d="M6 7.5l-1.5 3l4-2z" fill="#f4f8ff" /><rect x="7" y="3" width="5" height="1" fill="#9ab" shape-rendering="crispEdges"/><rect x="7" y="5" width="4" height="1" fill="#9ab" shape-rendering="crispEdges"/><circle cx="5" cy="11.5" r="4" fill="#f8c020" stroke="#a06a08" stroke-width="0.8"/><path d="M3 12.5c1 1.5 3 1.5 4 0" fill="none" stroke="#703" stroke-width="1" /><rect x="3.5" y="10" width="1" height="1.2" fill="#402" shape-rendering="crispEdges"/><rect x="6" y="10" width="1" height="1.2" fill="#402" shape-rendering="crispEdges"/></svg><div class="a tx " style="left:532.5px;top:746px;white-space:pre;letter-spacing:0.008px;font-size:11px;line-height:14px;color:#fff">Duc_chit Pham Trun...</div><div class="a" style="left:658px;top:741px;width:151px;height:24px;border-radius:3px;background:linear-gradient(to bottom,#1a419a 0%,#1e4fb5 10%,#1f52bb 50%,#2157c2 100%);box-shadow:inset 1px 1px 1px #14317c"></div><svg style="left:667px;top:745px" width="16" height="16" viewBox="0 0 16 16"><rect x="0" y="0" width="16" height="16" fill="#000" shape-rendering="crispEdges"/><rect x="1" y="1" width="14" height="14" fill="#f4f0a0" shape-rendering="crispEdges"/><path d="M2 1h12l-6 13z" fill="#0a1a8a" /><path d="M11 1h4v5l-5 8h-3z" fill="#f4f0e0" /><path d="M8 14l6-12" fill="none" stroke="#0a1a8a" stroke-width="2" /><rect x="12" y="8" width="3" height="3" fill="#1a8a1a" shape-rendering="crispEdges"/><rect x="11" y="12" width="4" height="3" fill="#d02010" shape-rendering="crispEdges"/><path d="M5.5 3.5v4h3v-4" fill="none" stroke="#ffffff" stroke-width="1" /><rect x="1" y="11" width="4" height="4" fill="#f8e8c0" shape-rendering="crispEdges"/></svg><div class="a tx " style="left:685.5px;top:746px;white-space:pre;letter-spacing:0.169px;font-size:11px;line-height:14px;color:#fff">test  - µVision3 - [C:...</div><div class="a" style="left:824px;top:738px;width:200px;height:30px;background:linear-gradient(to bottom,#0c5ec7 0%,#1e9ff2 6%,#17a0f2 12%,#1094ee 25%,#0f8dea 55%,#1193ee 80%,#0f89e4 92%,#0a66c0 100%);border-left:1px solid #0a3a9a;box-shadow:inset 1px 0 0 #3ab4f8"></div><svg style="left:835px;top:745px" width="16" height="16" viewBox="0 0 16 16"><circle cx="8" cy="8" r="7" fill="#f8d020" stroke="#b87a08" stroke-width="1"/><path d="M3 8.5c0.5 5 9.5 5 10 0z" fill="#d02818" /><path d="M3.5 9h9" fill="none" stroke="#fff" stroke-width="1.6" /><rect x="5.2" y="3.5" width="1.4" height="3" fill="#402" shape-rendering="crispEdges"/><rect x="9.4" y="3.5" width="1.4" height="3" fill="#402" shape-rendering="crispEdges"/></svg><svg style="left:852px;top:745px" width="16" height="16" viewBox="0 0 16 16"><rect x="0" y="2" width="16" height="12" fill="#d8201a" shape-rendering="crispEdges"/><text x="0.5" y="12" font-family="Liberation Sans" font-weight="bold" font-style="italic" font-size="10.5" fill="#fff" textLength="15" lengthAdjust="spacingAndGlyphs">ATI</text></svg><svg style="left:870px;top:745px" width="16" height="16" viewBox="0 0 16 16"><path d="M0 2l16 6l-16 7z" fill="#0a0a0a" /><path d="M1 2.5l14 5.5h-12z" fill="#18c028" /></svg><svg style="left:887px;top:745px" width="16" height="16" viewBox="0 0 16 16"><rect x="1" y="1" width="14" height="13" fill="#fff" shape-rendering="crispEdges"/><path d="M2 2h3v5l4-5h4l-5 6l5 6h-4l-4-5v5h-3z" fill="#d81820" /><path d="M9 10l5 5v-4M14 15h-4" fill="none" stroke="#000" stroke-width="1.6" /><rect x="9" y="9" width="5" height="5" fill="#000" shape-rendering="crispEdges"/></svg><svg style="left:906px;top:745px" width="16" height="16" viewBox="0 0 16 16"><circle cx="8" cy="7" r="6" fill="#9aa0a8" stroke="#555" stroke-width="1"/><circle cx="8" cy="7" r="3.2" fill="#c8ccd0" stroke="#666" stroke-width="0.8"/><circle cx="7" cy="6" r="1.4" fill="#e04030"/><path d="M9 14c3-0.5 5-2 6-5" fill="none" stroke="#7a9ae0" stroke-width="1" /></svg><svg style="left:924px;top:745px" width="16" height="16" viewBox="0 0 16 16"><path d="M4 8h9l2 5h-9z" fill="#cfd4c0" stroke="#4a5a3a" stroke-width="1" /><path d="M6 13l-2 2h9l2-2" fill="#8a9a7a" stroke="#3a4a2a" stroke-width="0.8" /><rect x="7" y="9.5" width="5" height="2" fill="#5a7ac0" shape-rendering="crispEdges"/><path d="M1 4l5-4v2.5h5v3h-5v2.5z" fill="#38b838" stroke="#106a10" stroke-width="0.8" /></svg><svg style="left:942px;top:745px" width="16" height="16" viewBox="0 0 16 16"><path d="M1 5.5h3.5l5-4.5v14l-5-4.5h-3.5z" fill="#e88a50" stroke="#5a2a10" stroke-width="1" /><path d="M11 3c2.5 2.5 2.5 7.5 0 10M13 1.5c3.5 3.5 3.5 9.5 0 13" fill="none" stroke="#102030" stroke-width="1.2" /></svg><div class="a tx " style="left:967.5px;top:746px;white-space:pre;letter-spacing:-0.138px;font-size:11px;line-height:14px;color:#fff">3:34 PM</div>
</body></html>
